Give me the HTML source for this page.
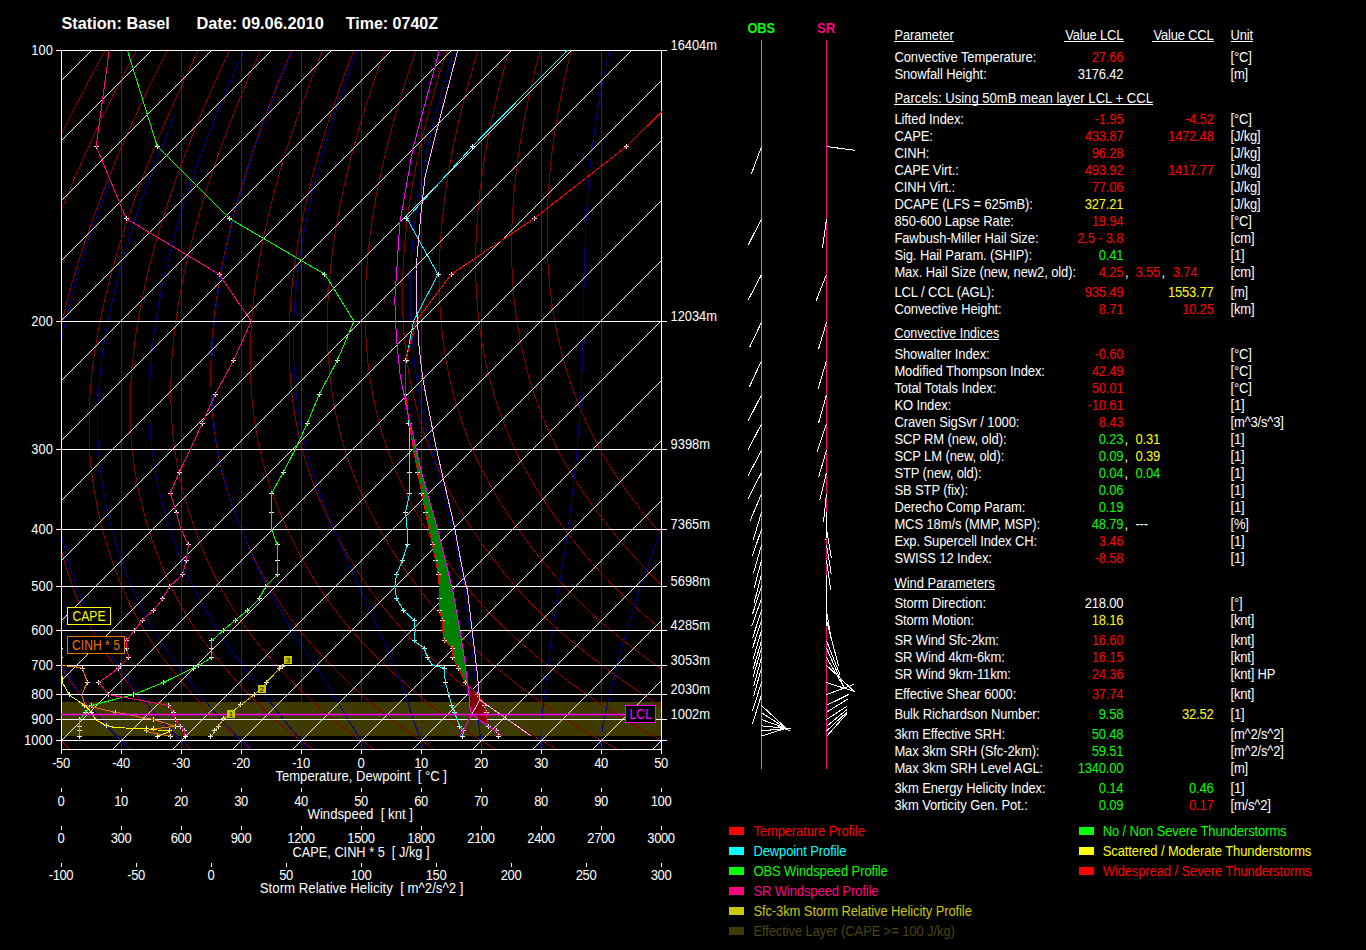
<!DOCTYPE html><html><head><meta charset="utf-8"><style>html,body{margin:0;padding:0;background:#000;overflow:hidden}svg{display:block}text{font-family:"Liberation Sans",sans-serif;white-space:pre}</style></head><body>
<svg width="1366" height="950" viewBox="0 0 1366 950" shape-rendering="crispEdges">
<rect width="1366" height="950" fill="#000"/>
<defs><clipPath id="pc"><rect x="61" y="50" width="601" height="700"/></clipPath></defs>
<g clip-path="url(#pc)">
<rect x="61" y="702" width="600" height="34" fill="#3f3a00"/>
<polyline points="117.6,27.9 114.9,32.8 112.1,37.7 109.4,42.6 106.8,47.5 104.1,52.4 101.4,57.2 98.8,62.1 96.2,66.9 93.6,71.7 91.0,76.5 88.5,81.3 85.9,86.1 83.5,90.8 81.0,95.6 78.6,100.3 76.1,104.9 73.8,109.6 71.4,114.3 69.1,118.9 66.7,123.5 64.5,128.1 62.2,132.7 60.0,137.3 57.8,141.8 55.6,146.3 53.4,150.8 51.3,155.3 49.2,159.8 47.1,164.2 45.0,168.7 43.0,173.1 41.0,177.5 39.0,181.9 37.1,186.2 35.1,190.6 33.2,194.9 31.4,199.2 29.5,203.5 27.7,207.8 25.9,212.1 24.1,216.3 22.3,220.5 20.6,224.7 18.9,228.9 17.2,233.1 15.6,237.3 13.9,241.4 12.3,245.5 10.8,249.6 9.2,253.7 7.7,257.8 6.2,261.9 4.7,265.9 3.2,269.9 1.8,273.9 0.4,277.9 -1.0,281.9 -2.3,285.9 -3.7,289.8 -5.0,293.7 -6.3,297.6 -7.5,301.5 -8.8,305.4 -10.0,309.3 -11.1,313.1 -12.3,316.9 -13.4,320.7 -14.6,324.5 -15.6,328.3 -16.7,332.1 -17.7,335.8 -18.7,339.6 -19.7,343.3 -20.7,347.0 -21.6,350.6 -22.5,354.3 -23.4,358.0 -24.3,361.6 -25.1,365.2 -25.9,368.8 -26.7,372.4 -27.5,376.0 -28.2,379.5 -29.0,383.1 -29.6,386.6 -30.3,390.1 -31.0,393.6 -31.6,397.1 -32.2,400.5 -32.7,404.0 -33.3,407.4 -33.8,410.8 -34.3,414.2 -34.8,417.6 -35.2,421.0 -35.6,424.3 -36.0,427.7 -36.4,431.0 -36.7,434.3 -37.0,437.6 -37.3,440.9 -37.6,444.1 -37.9,447.4 -38.1,450.6 -38.3,453.8 -38.4,457.0 -38.6,460.2 -38.7,463.4 -38.8,466.5 -38.9,469.7 -38.9,472.8 -39.0,475.9 -39.0,479.0 -39.0,482.1 -38.9,485.2 -38.9,488.3 -38.8,491.3 -38.7,494.4 -38.6,497.4 -38.5,500.4 -38.3,503.5 -38.1,506.5 -37.9,509.5 -37.7,512.5 -37.5,515.4 -37.2,518.4 -36.9,521.4 -36.7,524.3 -36.3,527.3 -36.0,530.2 -35.7,533.2 -35.3,536.1 -34.9,539.0 -34.5,541.9 -34.1,544.8 -33.7,547.7 -33.3,550.6 -32.8,553.5 -32.3,556.4 -31.8,559.3 -31.3,562.1 -30.7,565.0 -30.2,567.8 -29.6,570.6 -29.0,573.5 -28.4,576.3 -27.7,579.1 -27.1,581.9 -26.4,584.7 -25.7,587.5 -24.9,590.2 -24.2,593.0 -23.4,595.7 -22.6,598.5 -21.8,601.2 -21.0,603.9 -20.1,606.6 -19.3,609.3 -18.4,612.0 -17.4,614.7 -16.5,617.3 -15.5,619.9 -14.5,622.6 -13.5,625.2 -12.4,627.8 -11.4,630.4 -10.3,633.0 -9.1,635.5 -8.0,638.1 -6.8,640.6 -5.6,643.1 -4.4,645.6 -3.2,648.1 -1.9,650.6 -0.6,653.1 0.7,655.6 2.0,658.1 3.3,660.5 4.7,663.0 6.1,665.5 7.5,667.9 8.9,670.4 10.3,672.8 11.7,675.2 13.2,677.7 14.7,680.1 16.2,682.5 17.7,685.0 19.2,687.4 20.7,689.8 22.3,692.2 23.9,694.6 25.5,697.0 27.1,699.4 28.7,701.8 30.4,704.1 32.0,706.5 33.7,708.8 35.5,711.2 37.2,713.5 39.0,715.8 40.8,718.1 42.7,720.4 44.6,722.6 46.5,724.8 48.4,727.1 50.4,729.3 52.4,731.4 54.4,733.6 56.5,735.8 58.6,737.9 60.7,740.1 62.8,742.2 64.9,744.3 67.0,746.5 69.2,748.6 71.4,750.7 73.6,752.8 75.8,754.9" fill="none" stroke="#800000" stroke-width="1" stroke-linejoin="round" />
<polyline points="148.2,27.9 145.6,32.8 142.9,37.7 140.3,42.6 137.8,47.5 135.2,52.4 132.6,57.2 130.1,62.1 127.6,66.9 125.1,71.7 122.6,76.5 120.2,81.3 117.8,86.1 115.4,90.8 113.0,95.6 110.7,100.3 108.4,104.9 106.1,109.6 103.8,114.3 101.6,118.9 99.4,123.5 97.2,128.1 95.0,132.7 92.9,137.3 90.8,141.8 88.7,146.3 86.7,150.8 84.7,155.3 82.7,159.8 80.7,164.2 78.7,168.7 76.8,173.1 74.9,177.5 73.0,181.9 71.2,186.2 69.4,190.6 67.6,194.9 65.8,199.2 64.1,203.5 62.3,207.8 60.6,212.1 59.0,216.3 57.3,220.5 55.7,224.7 54.1,228.9 52.5,233.1 51.0,237.3 49.5,241.4 48.0,245.5 46.5,249.6 45.1,253.7 43.7,257.8 42.3,261.9 40.9,265.9 39.6,269.9 38.3,273.9 37.0,277.9 35.7,281.9 34.5,285.9 33.2,289.8 32.1,293.7 30.9,297.6 29.8,301.5 28.6,305.4 27.6,309.3 26.5,313.1 25.4,316.9 24.4,320.7 23.4,324.5 22.5,328.3 21.5,332.1 20.6,335.8 19.7,339.6 18.9,343.3 18.0,347.0 17.2,350.6 16.4,354.3 15.7,358.0 14.9,361.6 14.2,365.2 13.5,368.8 12.9,372.4 12.2,376.0 11.6,379.5 11.0,383.1 10.5,386.6 9.9,390.1 9.4,393.6 8.9,397.1 8.4,400.5 8.0,404.0 7.6,407.4 7.2,410.8 6.8,414.2 6.5,417.6 6.2,421.0 5.9,424.3 5.6,427.7 5.4,431.0 5.2,434.3 5.0,437.6 4.8,440.9 4.7,444.1 4.6,447.4 4.5,450.6 4.5,453.8 4.4,457.0 4.4,460.2 4.4,463.4 4.5,466.5 4.5,469.7 4.6,472.8 4.7,475.9 4.8,479.0 5.0,482.1 5.2,485.2 5.4,488.3 5.6,491.3 5.8,494.4 6.1,497.4 6.4,500.4 6.7,503.5 7.0,506.5 7.3,509.5 7.7,512.5 8.1,515.4 8.5,518.4 8.9,521.4 9.3,524.3 9.8,527.3 10.2,530.2 10.7,533.2 11.2,536.1 11.8,539.0 12.3,541.9 12.9,544.8 13.4,547.7 14.0,550.6 14.7,553.5 15.3,556.4 15.9,559.3 16.6,562.1 17.3,565.0 18.0,567.8 18.8,570.6 19.5,573.5 20.3,576.3 21.1,579.1 21.9,581.9 22.7,584.7 23.6,587.5 24.5,590.2 25.4,593.0 26.3,595.7 27.3,598.5 28.2,601.2 29.2,603.9 30.2,606.6 31.3,609.3 32.3,612.0 33.4,614.7 34.5,617.3 35.7,619.9 36.8,622.6 38.0,625.2 39.2,627.8 40.5,630.4 41.7,633.0 43.0,635.5 44.4,638.1 45.7,640.6 47.1,643.1 48.4,645.6 49.9,648.1 51.3,650.6 52.7,653.1 54.2,655.6 55.7,658.1 57.2,660.5 58.7,663.0 60.3,665.5 61.8,667.9 63.4,670.4 65.0,672.8 66.6,675.2 68.3,677.7 69.9,680.1 71.6,682.5 73.3,685.0 75.0,687.4 76.7,689.8 78.4,692.2 80.2,694.6 81.9,697.0 83.7,699.4 85.5,701.8 87.4,704.1 89.2,706.5 91.1,708.8 93.0,711.2 95.0,713.5 97.0,715.8 99.0,718.1 101.0,720.4 103.1,722.6 105.2,724.8 107.3,727.1 109.4,729.3 111.6,731.4 113.8,733.6 116.1,735.8 118.4,737.9 120.6,740.1 122.9,742.2 125.3,744.3 127.6,746.5 130.0,748.6 132.3,750.7 134.8,752.8 137.2,754.9" fill="none" stroke="#800000" stroke-width="1" stroke-linejoin="round" />
<polyline points="178.9,27.9 176.3,32.8 173.8,37.7 171.3,42.6 168.8,47.5 166.3,52.4 163.8,57.2 161.4,62.1 159.0,66.9 156.6,71.7 154.2,76.5 151.9,81.3 149.6,86.1 147.3,90.8 145.0,95.6 142.8,100.3 140.6,104.9 138.4,109.6 136.2,114.3 134.1,118.9 132.0,123.5 129.9,128.1 127.9,132.7 125.9,137.3 123.9,141.8 121.9,146.3 119.9,150.8 118.0,155.3 116.1,159.8 114.3,164.2 112.4,168.7 110.6,173.1 108.8,177.5 107.0,181.9 105.3,186.2 103.6,190.6 101.9,194.9 100.2,199.2 98.6,203.5 97.0,207.8 95.4,212.1 93.8,216.3 92.3,220.5 90.8,224.7 89.3,228.9 87.9,233.1 86.4,237.3 85.0,241.4 83.7,245.5 82.3,249.6 81.0,253.7 79.7,257.8 78.4,261.9 77.1,265.9 75.9,269.9 74.7,273.9 73.5,277.9 72.4,281.9 71.3,285.9 70.2,289.8 69.1,293.7 68.1,297.6 67.0,301.5 66.0,305.4 65.1,309.3 64.1,313.1 63.2,316.9 62.3,320.7 61.4,324.5 60.6,328.3 59.8,332.1 59.0,335.8 58.2,339.6 57.5,343.3 56.8,347.0 56.1,350.6 55.4,354.3 54.8,358.0 54.1,361.6 53.6,365.2 53.0,368.8 52.5,372.4 51.9,376.0 51.5,379.5 51.0,383.1 50.6,386.6 50.1,390.1 49.8,393.6 49.4,397.1 49.1,400.5 48.8,404.0 48.5,407.4 48.2,410.8 48.0,414.2 47.8,417.6 47.6,421.0 47.4,424.3 47.3,427.7 47.2,431.0 47.1,434.3 47.1,437.6 47.0,440.9 47.0,444.1 47.1,447.4 47.1,450.6 47.2,453.8 47.3,457.0 47.4,460.2 47.6,463.4 47.7,466.5 47.9,469.7 48.1,472.8 48.4,475.9 48.7,479.0 49.0,482.1 49.3,485.2 49.6,488.3 50.0,491.3 50.3,494.4 50.7,497.4 51.2,500.4 51.6,503.5 52.1,506.5 52.6,509.5 53.1,512.5 53.6,515.4 54.1,518.4 54.7,521.4 55.3,524.3 55.9,527.3 56.5,530.2 57.1,533.2 57.8,536.1 58.4,539.0 59.1,541.9 59.8,544.8 60.6,547.7 61.3,550.6 62.1,553.5 62.9,556.4 63.7,559.3 64.5,562.1 65.4,565.0 66.2,567.8 67.1,570.6 68.0,573.5 69.0,576.3 69.9,579.1 70.9,581.9 71.9,584.7 72.9,587.5 73.9,590.2 75.0,593.0 76.1,595.7 77.2,598.5 78.3,601.2 79.5,603.9 80.6,606.6 81.8,609.3 83.1,612.0 84.3,614.7 85.6,617.3 86.9,619.9 88.2,622.6 89.5,625.2 90.9,627.8 92.3,630.4 93.8,633.0 95.2,635.5 96.7,638.1 98.2,640.6 99.7,643.1 101.3,645.6 102.9,648.1 104.5,650.6 106.1,653.1 107.7,655.6 109.4,658.1 111.1,660.5 112.8,663.0 114.5,665.5 116.2,667.9 118.0,670.4 119.7,672.8 121.5,675.2 123.3,677.7 125.1,680.1 127.0,682.5 128.8,685.0 130.7,687.4 132.6,689.8 134.5,692.2 136.5,694.6 138.4,697.0 140.4,699.4 142.4,701.8 144.4,704.1 146.4,706.5 148.5,708.8 150.6,711.2 152.7,713.5 154.9,715.8 157.1,718.1 159.3,720.4 161.5,722.6 163.8,724.8 166.1,727.1 168.5,729.3 170.9,731.4 173.3,733.6 175.7,735.8 178.2,737.9 180.6,740.1 183.1,742.2 185.6,744.3 188.2,746.5 190.7,748.6 193.3,750.7 195.9,752.8 198.5,754.9" fill="none" stroke="#800000" stroke-width="1" stroke-linejoin="round" />
<polyline points="209.5,27.9 207.0,32.8 204.6,37.7 202.2,42.6 199.8,47.5 197.4,52.4 195.1,57.2 192.7,62.1 190.4,66.9 188.1,71.7 185.8,76.5 183.6,81.3 181.4,86.1 179.2,90.8 177.0,95.6 174.9,100.3 172.8,104.9 170.7,109.6 168.7,114.3 166.6,118.9 164.6,123.5 162.7,128.1 160.7,132.7 158.8,137.3 156.9,141.8 155.0,146.3 153.2,150.8 151.4,155.3 149.6,159.8 147.8,164.2 146.1,168.7 144.4,173.1 142.7,177.5 141.0,181.9 139.4,186.2 137.8,190.6 136.2,194.9 134.7,199.2 133.1,203.5 131.6,207.8 130.2,212.1 128.7,216.3 127.3,220.5 125.9,224.7 124.5,228.9 123.2,233.1 121.9,237.3 120.6,241.4 119.3,245.5 118.1,249.6 116.9,253.7 115.7,257.8 114.5,261.9 113.4,265.9 112.3,269.9 111.2,273.9 110.1,277.9 109.1,281.9 108.1,285.9 107.1,289.8 106.1,293.7 105.2,297.6 104.3,301.5 103.4,305.4 102.6,309.3 101.8,313.1 101.0,316.9 100.2,320.7 99.4,324.5 98.7,328.3 98.0,332.1 97.3,335.8 96.7,339.6 96.1,343.3 95.5,347.0 94.9,350.6 94.4,354.3 93.9,358.0 93.4,361.6 92.9,365.2 92.5,368.8 92.0,372.4 91.7,376.0 91.3,379.5 91.0,383.1 90.7,386.6 90.4,390.1 90.1,393.6 89.9,397.1 89.7,400.5 89.5,404.0 89.3,407.4 89.2,410.8 89.1,414.2 89.0,417.6 89.0,421.0 89.0,424.3 89.0,427.7 89.0,431.0 89.0,434.3 89.1,437.6 89.2,440.9 89.4,444.1 89.5,447.4 89.7,450.6 89.9,453.8 90.1,457.0 90.4,460.2 90.7,463.4 91.0,466.5 91.3,469.7 91.7,472.8 92.1,475.9 92.5,479.0 92.9,482.1 93.4,485.2 93.8,488.3 94.3,491.3 94.9,494.4 95.4,497.4 96.0,500.4 96.6,503.5 97.2,506.5 97.8,509.5 98.4,512.5 99.1,515.4 99.8,518.4 100.5,521.4 101.2,524.3 102.0,527.3 102.7,530.2 103.5,533.2 104.3,536.1 105.1,539.0 106.0,541.9 106.8,544.8 107.7,547.7 108.6,550.6 109.5,553.5 110.5,556.4 111.4,559.3 112.4,562.1 113.4,565.0 114.4,567.8 115.5,570.6 116.5,573.5 117.6,576.3 118.7,579.1 119.8,581.9 121.0,584.7 122.2,587.5 123.4,590.2 124.6,593.0 125.8,595.7 127.1,598.5 128.4,601.2 129.7,603.9 131.0,606.6 132.4,609.3 133.8,612.0 135.2,614.7 136.6,617.3 138.1,619.9 139.6,622.6 141.1,625.2 142.6,627.8 144.2,630.4 145.8,633.0 147.4,635.5 149.0,638.1 150.7,640.6 152.4,643.1 154.1,645.6 155.9,648.1 157.6,650.6 159.4,653.1 161.2,655.6 163.1,658.1 164.9,660.5 166.8,663.0 168.7,665.5 170.6,667.9 172.5,670.4 174.4,672.8 176.4,675.2 178.4,677.7 180.4,680.1 182.4,682.5 184.4,685.0 186.5,687.4 188.6,689.8 190.7,692.2 192.8,694.6 194.9,697.0 197.0,699.4 199.2,701.8 201.4,704.1 203.6,706.5 205.9,708.8 208.2,711.2 210.5,713.5 212.8,715.8 215.2,718.1 217.6,720.4 220.0,722.6 222.5,724.8 225.0,727.1 227.5,729.3 230.1,731.4 232.7,733.6 235.3,735.8 238.0,737.9 240.6,740.1 243.3,742.2 246.0,744.3 248.7,746.5 251.5,748.6 254.2,750.7 257.0,752.8 259.8,754.9" fill="none" stroke="#800000" stroke-width="1" stroke-linejoin="round" />
<polyline points="240.1,27.9 237.7,32.8 235.4,37.7 233.1,42.6 230.8,47.5 228.5,52.4 226.3,57.2 224.0,62.1 221.8,66.9 219.6,71.7 217.4,76.5 215.3,81.3 213.2,86.1 211.1,90.8 209.1,95.6 207.0,100.3 205.0,104.9 203.0,109.6 201.1,114.3 199.2,118.9 197.3,123.5 195.4,128.1 193.6,132.7 191.7,137.3 190.0,141.8 188.2,146.3 186.5,150.8 184.7,155.3 183.1,159.8 181.4,164.2 179.8,168.7 178.2,173.1 176.6,177.5 175.0,181.9 173.5,186.2 172.0,190.6 170.6,194.9 169.1,199.2 167.7,203.5 166.3,207.8 164.9,212.1 163.6,216.3 162.3,220.5 161.0,224.7 159.7,228.9 158.5,233.1 157.3,237.3 156.1,241.4 155.0,245.5 153.9,249.6 152.8,253.7 151.7,257.8 150.6,261.9 149.6,265.9 148.6,269.9 147.6,273.9 146.7,277.9 145.8,281.9 144.9,285.9 144.0,289.8 143.2,293.7 142.4,297.6 141.6,301.5 140.8,305.4 140.1,309.3 139.4,313.1 138.7,316.9 138.1,320.7 137.4,324.5 136.8,328.3 136.3,332.1 135.7,335.8 135.2,339.6 134.7,343.3 134.2,347.0 133.8,350.6 133.3,354.3 133.0,358.0 132.6,361.6 132.2,365.2 131.9,368.8 131.6,372.4 131.4,376.0 131.1,379.5 130.9,383.1 130.8,386.6 130.6,390.1 130.5,393.6 130.4,397.1 130.3,400.5 130.2,404.0 130.2,407.4 130.2,410.8 130.2,414.2 130.3,417.6 130.4,421.0 130.5,424.3 130.6,427.7 130.8,431.0 131.0,434.3 131.2,437.6 131.4,440.9 131.7,444.1 132.0,447.4 132.3,450.6 132.6,453.8 133.0,457.0 133.4,460.2 133.8,463.4 134.3,466.5 134.7,469.7 135.2,472.8 135.8,475.9 136.3,479.0 136.9,482.1 137.5,485.2 138.1,488.3 138.7,491.3 139.4,494.4 140.1,497.4 140.8,500.4 141.5,503.5 142.3,506.5 143.0,509.5 143.8,512.5 144.6,515.4 145.5,518.4 146.3,521.4 147.2,524.3 148.1,527.3 149.0,530.2 149.9,533.2 150.9,536.1 151.8,539.0 152.8,541.9 153.8,544.8 154.9,547.7 155.9,550.6 157.0,553.5 158.1,556.4 159.2,559.3 160.3,562.1 161.5,565.0 162.6,567.8 163.8,570.6 165.0,573.5 166.3,576.3 167.5,579.1 168.8,581.9 170.1,584.7 171.4,587.5 172.8,590.2 174.2,593.0 175.6,595.7 177.0,598.5 178.4,601.2 179.9,603.9 181.4,606.6 182.9,609.3 184.5,612.0 186.0,614.7 187.6,617.3 189.3,619.9 190.9,622.6 192.6,625.2 194.3,627.8 196.0,630.4 197.8,633.0 199.6,635.5 201.4,638.1 203.2,640.6 205.1,643.1 207.0,645.6 208.9,648.1 210.8,650.6 212.8,653.1 214.7,655.6 216.8,658.1 218.8,660.5 220.8,663.0 222.9,665.5 225.0,667.9 227.0,670.4 229.2,672.8 231.3,675.2 233.5,677.7 235.6,680.1 237.8,682.5 240.0,685.0 242.3,687.4 244.5,689.8 246.8,692.2 249.1,694.6 251.4,697.0 253.7,699.4 256.1,701.8 258.4,704.1 260.8,706.5 263.3,708.8 265.7,711.2 268.2,713.5 270.7,715.8 273.3,718.1 275.9,720.4 278.5,722.6 281.2,724.8 283.9,727.1 286.6,729.3 289.3,731.4 292.1,733.6 294.9,735.8 297.7,737.9 300.6,740.1 303.5,742.2 306.4,744.3 309.3,746.5 312.2,748.6 315.2,750.7 318.2,752.8 321.2,754.9" fill="none" stroke="#800000" stroke-width="1" stroke-linejoin="round" />
<polyline points="270.7,27.9 268.5,32.8 266.2,37.7 264.0,42.6 261.8,47.5 259.7,52.4 257.5,57.2 255.3,62.1 253.2,66.9 251.1,71.7 249.1,76.5 247.0,81.3 245.0,86.1 243.0,90.8 241.1,95.6 239.1,100.3 237.2,104.9 235.4,109.6 233.5,114.3 231.7,118.9 229.9,123.5 228.1,128.1 226.4,132.7 224.7,137.3 223.0,141.8 221.3,146.3 219.7,150.8 218.1,155.3 216.5,159.8 215.0,164.2 213.5,168.7 212.0,173.1 210.5,177.5 209.1,181.9 207.6,186.2 206.2,190.6 204.9,194.9 203.6,199.2 202.2,203.5 201.0,207.8 199.7,212.1 198.5,216.3 197.3,220.5 196.1,224.7 195.0,228.9 193.8,233.1 192.7,237.3 191.7,241.4 190.6,245.5 189.6,249.6 188.6,253.7 187.7,257.8 186.7,261.9 185.8,265.9 185.0,269.9 184.1,273.9 183.3,277.9 182.5,281.9 181.7,285.9 181.0,289.8 180.2,293.7 179.5,297.6 178.9,301.5 178.2,305.4 177.6,309.3 177.0,313.1 176.5,316.9 175.9,320.7 175.4,324.5 174.9,328.3 174.5,332.1 174.1,335.8 173.7,339.6 173.3,343.3 172.9,347.0 172.6,350.6 172.3,354.3 172.0,358.0 171.8,361.6 171.6,365.2 171.4,368.8 171.2,372.4 171.1,376.0 171.0,379.5 170.9,383.1 170.9,386.6 170.8,390.1 170.8,393.6 170.8,397.1 170.9,400.5 171.0,404.0 171.1,407.4 171.2,410.8 171.4,414.2 171.6,417.6 171.8,421.0 172.0,424.3 172.3,427.7 172.6,431.0 172.9,434.3 173.2,437.6 173.6,440.9 174.0,444.1 174.4,447.4 174.9,450.6 175.4,453.8 175.9,457.0 176.4,460.2 177.0,463.4 177.5,466.5 178.2,469.7 178.8,472.8 179.4,475.9 180.1,479.0 180.8,482.1 181.6,485.2 182.3,488.3 183.1,491.3 183.9,494.4 184.7,497.4 185.6,500.4 186.5,503.5 187.3,506.5 188.3,509.5 189.2,512.5 190.2,515.4 191.1,518.4 192.1,521.4 193.1,524.3 194.2,527.3 195.2,530.2 196.3,533.2 197.4,536.1 198.5,539.0 199.7,541.9 200.8,544.8 202.0,547.7 203.2,550.6 204.4,553.5 205.7,556.4 206.9,559.3 208.2,562.1 209.5,565.0 210.8,567.8 212.2,570.6 213.5,573.5 214.9,576.3 216.3,579.1 217.8,581.9 219.2,584.7 220.7,587.5 222.2,590.2 223.8,593.0 225.3,595.7 226.9,598.5 228.5,601.2 230.1,603.9 231.8,606.6 233.5,609.3 235.2,612.0 236.9,614.7 238.7,617.3 240.4,619.9 242.3,622.6 244.1,625.2 246.0,627.8 247.9,630.4 249.8,633.0 251.7,635.5 253.7,638.1 255.7,640.6 257.8,643.1 259.8,645.6 261.9,648.1 264.0,650.6 266.1,653.1 268.3,655.6 270.4,658.1 272.6,660.5 274.8,663.0 277.1,665.5 279.3,667.9 281.6,670.4 283.9,672.8 286.2,675.2 288.5,677.7 290.9,680.1 293.2,682.5 295.6,685.0 298.0,687.4 300.5,689.8 302.9,692.2 305.4,694.6 307.9,697.0 310.4,699.4 312.9,701.8 315.5,704.1 318.0,706.5 320.7,708.8 323.3,711.2 326.0,713.5 328.7,715.8 331.4,718.1 334.2,720.4 337.0,722.6 339.8,724.8 342.7,727.1 345.6,729.3 348.6,731.4 351.5,733.6 354.5,735.8 357.5,737.9 360.6,740.1 363.7,742.2 366.7,744.3 369.8,746.5 373.0,748.6 376.1,750.7 379.3,752.8 382.5,754.9" fill="none" stroke="#800000" stroke-width="1" stroke-linejoin="round" />
<polyline points="301.4,27.9 299.2,32.8 297.1,37.7 294.9,42.6 292.9,47.5 290.8,52.4 288.7,57.2 286.7,62.1 284.6,66.9 282.6,71.7 280.7,76.5 278.7,81.3 276.8,86.1 274.9,90.8 273.1,95.6 271.3,100.3 269.5,104.9 267.7,109.6 265.9,114.3 264.2,118.9 262.5,123.5 260.9,128.1 259.2,132.7 257.6,137.3 256.0,141.8 254.5,146.3 253.0,150.8 251.5,155.3 250.0,159.8 248.6,164.2 247.1,168.7 245.8,173.1 244.4,177.5 243.1,181.9 241.7,186.2 240.5,190.6 239.2,194.9 238.0,199.2 236.8,203.5 235.6,207.8 234.5,212.1 233.4,216.3 232.3,220.5 231.2,224.7 230.2,228.9 229.2,233.1 228.2,237.3 227.2,241.4 226.3,245.5 225.4,249.6 224.5,253.7 223.7,257.8 222.9,261.9 222.1,265.9 221.3,269.9 220.6,273.9 219.9,277.9 219.2,281.9 218.5,285.9 217.9,289.8 217.3,293.7 216.7,297.6 216.2,301.5 215.6,305.4 215.1,309.3 214.7,313.1 214.2,316.9 213.8,320.7 213.4,324.5 213.1,328.3 212.7,332.1 212.4,335.8 212.1,339.6 211.9,343.3 211.7,347.0 211.5,350.6 211.3,354.3 211.1,358.0 211.0,361.6 210.9,365.2 210.9,368.8 210.8,372.4 210.8,376.0 210.8,379.5 210.9,383.1 211.0,386.6 211.1,390.1 211.2,393.6 211.3,397.1 211.5,400.5 211.7,404.0 212.0,407.4 212.2,410.8 212.5,414.2 212.8,417.6 213.2,421.0 213.5,424.3 213.9,427.7 214.3,431.0 214.8,434.3 215.3,437.6 215.8,440.9 216.3,444.1 216.9,447.4 217.5,450.6 218.1,453.8 218.7,457.0 219.4,460.2 220.1,463.4 220.8,466.5 221.6,469.7 222.3,472.8 223.1,475.9 224.0,479.0 224.8,482.1 225.7,485.2 226.6,488.3 227.5,491.3 228.4,494.4 229.4,497.4 230.4,500.4 231.4,503.5 232.4,506.5 233.5,509.5 234.6,512.5 235.7,515.4 236.8,518.4 237.9,521.4 239.1,524.3 240.3,527.3 241.5,530.2 242.7,533.2 244.0,536.1 245.2,539.0 246.5,541.9 247.8,544.8 249.1,547.7 250.5,550.6 251.9,553.5 253.2,556.4 254.7,559.3 256.1,562.1 257.5,565.0 259.0,567.8 260.5,570.6 262.0,573.5 263.6,576.3 265.2,579.1 266.8,581.9 268.4,584.7 270.0,587.5 271.7,590.2 273.4,593.0 275.1,595.7 276.8,598.5 278.6,601.2 280.4,603.9 282.2,606.6 284.0,609.3 285.9,612.0 287.8,614.7 289.7,617.3 291.6,619.9 293.6,622.6 295.6,625.2 297.6,627.8 299.7,630.4 301.8,633.0 303.9,635.5 306.1,638.1 308.2,640.6 310.4,643.1 312.6,645.6 314.9,648.1 317.2,650.6 319.5,653.1 321.8,655.6 324.1,658.1 326.5,660.5 328.9,663.0 331.3,665.5 333.7,667.9 336.1,670.4 338.6,672.8 341.1,675.2 343.6,677.7 346.1,680.1 348.6,682.5 351.2,685.0 353.8,687.4 356.4,689.8 359.0,692.2 361.7,694.6 364.3,697.0 367.0,699.4 369.7,701.8 372.5,704.1 375.2,706.5 378.0,708.8 380.9,711.2 383.7,713.5 386.6,715.8 389.5,718.1 392.5,720.4 395.5,722.6 398.5,724.8 401.6,727.1 404.7,729.3 407.8,731.4 410.9,733.6 414.1,735.8 417.3,737.9 420.6,740.1 423.8,742.2 427.1,744.3 430.4,746.5 433.7,748.6 437.1,750.7 440.4,752.8 443.8,754.9" fill="none" stroke="#800000" stroke-width="1" stroke-linejoin="round" />
<polyline points="332.0,27.9 329.9,32.8 327.9,37.7 325.9,42.6 323.9,47.5 321.9,52.4 319.9,57.2 318.0,62.1 316.0,66.9 314.1,71.7 312.3,76.5 310.4,81.3 308.6,86.1 306.9,90.8 305.1,95.6 303.4,100.3 301.7,104.9 300.0,109.6 298.4,114.3 296.7,118.9 295.2,123.5 293.6,128.1 292.1,132.7 290.6,137.3 289.1,141.8 287.6,146.3 286.2,150.8 284.8,155.3 283.5,159.8 282.1,164.2 280.8,168.7 279.5,173.1 278.3,177.5 277.1,181.9 275.9,186.2 274.7,190.6 273.5,194.9 272.4,199.2 271.3,203.5 270.3,207.8 269.2,212.1 268.2,216.3 267.3,220.5 266.3,224.7 265.4,228.9 264.5,233.1 263.6,237.3 262.8,241.4 262.0,245.5 261.2,249.6 260.4,253.7 259.7,257.8 259.0,261.9 258.3,265.9 257.7,269.9 257.0,273.9 256.4,277.9 255.9,281.9 255.3,285.9 254.8,289.8 254.3,293.7 253.9,297.6 253.4,301.5 253.0,305.4 252.7,309.3 252.3,313.1 252.0,316.9 251.7,320.7 251.4,324.5 251.2,328.3 251.0,332.1 250.8,335.8 250.6,339.6 250.5,343.3 250.4,347.0 250.3,350.6 250.3,354.3 250.2,358.0 250.2,361.6 250.3,365.2 250.3,368.8 250.4,372.4 250.5,376.0 250.7,379.5 250.9,383.1 251.1,386.6 251.3,390.1 251.5,393.6 251.8,397.1 252.1,400.5 252.5,404.0 252.8,407.4 253.2,410.8 253.6,414.2 254.1,417.6 254.6,421.0 255.1,424.3 255.6,427.7 256.1,431.0 256.7,434.3 257.3,437.6 258.0,440.9 258.6,444.1 259.3,447.4 260.1,450.6 260.8,453.8 261.6,457.0 262.4,460.2 263.2,463.4 264.1,466.5 265.0,469.7 265.9,472.8 266.8,475.9 267.8,479.0 268.8,482.1 269.8,485.2 270.8,488.3 271.9,491.3 273.0,494.4 274.1,497.4 275.2,500.4 276.4,503.5 277.5,506.5 278.7,509.5 280.0,512.5 281.2,515.4 282.5,518.4 283.8,521.4 285.1,524.3 286.4,527.3 287.7,530.2 289.1,533.2 290.5,536.1 291.9,539.0 293.3,541.9 294.8,544.8 296.3,547.7 297.8,550.6 299.3,553.5 300.8,556.4 302.4,559.3 304.0,562.1 305.6,565.0 307.2,567.8 308.9,570.6 310.5,573.5 312.2,576.3 314.0,579.1 315.7,581.9 317.5,584.7 319.3,587.5 321.1,590.2 323.0,593.0 324.8,595.7 326.7,598.5 328.6,601.2 330.6,603.9 332.6,606.6 334.6,609.3 336.6,612.0 338.6,614.7 340.7,617.3 342.8,619.9 345.0,622.6 347.1,625.2 349.3,627.8 351.6,630.4 353.8,633.0 356.1,635.5 358.4,638.1 360.7,640.6 363.1,643.1 365.5,645.6 367.9,648.1 370.3,650.6 372.8,653.1 375.3,655.6 377.8,658.1 380.3,660.5 382.9,663.0 385.5,665.5 388.1,667.9 390.7,670.4 393.3,672.8 396.0,675.2 398.6,677.7 401.3,680.1 404.1,682.5 406.8,685.0 409.6,687.4 412.3,689.8 415.1,692.2 418.0,694.6 420.8,697.0 423.7,699.4 426.6,701.8 429.5,704.1 432.4,706.5 435.4,708.8 438.4,711.2 441.5,713.5 444.5,715.8 447.6,718.1 450.8,720.4 454.0,722.6 457.2,724.8 460.4,727.1 463.7,729.3 467.0,731.4 470.4,733.6 473.7,735.8 477.1,737.9 480.6,740.1 484.0,742.2 487.5,744.3 491.0,746.5 494.5,748.6 498.0,750.7 501.6,752.8 505.2,754.9" fill="none" stroke="#800000" stroke-width="1" stroke-linejoin="round" />
<polyline points="362.6,27.9 360.6,32.8 358.7,37.7 356.8,42.6 354.9,47.5 353.0,52.4 351.1,57.2 349.3,62.1 347.5,66.9 345.7,71.7 343.9,76.5 342.2,81.3 340.4,86.1 338.8,90.8 337.1,95.6 335.5,100.3 333.9,104.9 332.3,109.6 330.8,114.3 329.3,118.9 327.8,123.5 326.3,128.1 324.9,132.7 323.5,137.3 322.1,141.8 320.8,146.3 319.5,150.8 318.2,155.3 316.9,159.8 315.7,164.2 314.5,168.7 313.3,173.1 312.2,177.5 311.1,181.9 310.0,186.2 308.9,190.6 307.9,194.9 306.9,199.2 305.9,203.5 304.9,207.8 304.0,212.1 303.1,216.3 302.2,220.5 301.4,224.7 300.6,228.9 299.8,233.1 299.1,237.3 298.3,241.4 297.6,245.5 296.9,249.6 296.3,253.7 295.7,257.8 295.1,261.9 294.5,265.9 294.0,269.9 293.5,273.9 293.0,277.9 292.6,281.9 292.1,285.9 291.7,289.8 291.4,293.7 291.0,297.6 290.7,301.5 290.4,305.4 290.2,309.3 289.9,313.1 289.7,316.9 289.6,320.7 289.4,324.5 289.3,328.3 289.2,332.1 289.1,335.8 289.1,339.6 289.1,343.3 289.1,347.0 289.2,350.6 289.2,354.3 289.3,358.0 289.5,361.6 289.6,365.2 289.8,368.8 290.0,372.4 290.3,376.0 290.5,379.5 290.8,383.1 291.2,386.6 291.5,390.1 291.9,393.6 292.3,397.1 292.7,400.5 293.2,404.0 293.7,407.4 294.2,410.8 294.8,414.2 295.3,417.6 295.9,421.0 296.6,424.3 297.2,427.7 297.9,431.0 298.6,434.3 299.4,437.6 300.2,440.9 301.0,444.1 301.8,447.4 302.7,450.6 303.5,453.8 304.5,457.0 305.4,460.2 306.4,463.4 307.4,466.5 308.4,469.7 309.4,472.8 310.5,475.9 311.6,479.0 312.7,482.1 313.9,485.2 315.1,488.3 316.3,491.3 317.5,494.4 318.7,497.4 320.0,500.4 321.3,503.5 322.6,506.5 324.0,509.5 325.3,512.5 326.7,515.4 328.1,518.4 329.6,521.4 331.0,524.3 332.5,527.3 334.0,530.2 335.5,533.2 337.0,536.1 338.6,539.0 340.2,541.9 341.8,544.8 343.4,547.7 345.1,550.6 346.7,553.5 348.4,556.4 350.1,559.3 351.9,562.1 353.6,565.0 355.4,567.8 357.2,570.6 359.1,573.5 360.9,576.3 362.8,579.1 364.7,581.9 366.6,584.7 368.6,587.5 370.5,590.2 372.5,593.0 374.6,595.7 376.6,598.5 378.7,601.2 380.8,603.9 382.9,606.6 385.1,609.3 387.3,612.0 389.5,614.7 391.8,617.3 394.0,619.9 396.3,622.6 398.7,625.2 401.0,627.8 403.4,630.4 405.8,633.0 408.3,635.5 410.7,638.1 413.2,640.6 415.8,643.1 418.3,645.6 420.9,648.1 423.5,650.6 426.2,653.1 428.8,655.6 431.5,658.1 434.2,660.5 436.9,663.0 439.7,665.5 442.4,667.9 445.2,670.4 448.0,672.8 450.9,675.2 453.7,677.7 456.6,680.1 459.5,682.5 462.4,685.0 465.3,687.4 468.3,689.8 471.3,692.2 474.3,694.6 477.3,697.0 480.3,699.4 483.4,701.8 486.5,704.1 489.6,706.5 492.8,708.8 496.0,711.2 499.2,713.5 502.5,715.8 505.8,718.1 509.1,720.4 512.4,722.6 515.8,724.8 519.3,727.1 522.8,729.3 526.3,731.4 529.8,733.6 533.3,735.8 536.9,737.9 540.6,740.1 544.2,742.2 547.8,744.3 551.5,746.5 555.2,748.6 559.0,750.7 562.7,752.8 566.5,754.9" fill="none" stroke="#800000" stroke-width="1" stroke-linejoin="round" />
<polyline points="393.2,27.9 391.4,32.8 389.5,37.7 387.7,42.6 385.9,47.5 384.1,52.4 382.3,57.2 380.6,62.1 378.9,66.9 377.2,71.7 375.5,76.5 373.9,81.3 372.3,86.1 370.7,90.8 369.1,95.6 367.6,100.3 366.1,104.9 364.7,109.6 363.2,114.3 361.8,118.9 360.4,123.5 359.1,128.1 357.8,132.7 356.5,137.3 355.2,141.8 354.0,146.3 352.7,150.8 351.6,155.3 350.4,159.8 349.3,164.2 348.2,168.7 347.1,173.1 346.1,177.5 345.1,181.9 344.1,186.2 343.1,190.6 342.2,194.9 341.3,199.2 340.4,203.5 339.6,207.8 338.8,212.1 338.0,216.3 337.2,220.5 336.5,224.7 335.8,228.9 335.1,233.1 334.5,237.3 333.9,241.4 333.3,245.5 332.7,249.6 332.2,253.7 331.7,257.8 331.2,261.9 330.8,265.9 330.3,269.9 330.0,273.9 329.6,277.9 329.3,281.9 328.9,285.9 328.7,289.8 328.4,293.7 328.2,297.6 328.0,301.5 327.8,305.4 327.7,309.3 327.6,313.1 327.5,316.9 327.4,320.7 327.4,324.5 327.4,328.3 327.4,332.1 327.5,335.8 327.6,339.6 327.7,343.3 327.8,347.0 328.0,350.6 328.2,354.3 328.4,358.0 328.7,361.6 329.0,365.2 329.3,368.8 329.6,372.4 330.0,376.0 330.4,379.5 330.8,383.1 331.3,386.6 331.7,390.1 332.2,393.6 332.8,397.1 333.3,400.5 333.9,404.0 334.6,407.4 335.2,410.8 335.9,414.2 336.6,417.6 337.3,421.0 338.1,424.3 338.9,427.7 339.7,431.0 340.6,434.3 341.4,437.6 342.3,440.9 343.3,444.1 344.2,447.4 345.2,450.6 346.3,453.8 347.3,457.0 348.4,460.2 349.5,463.4 350.6,466.5 351.8,469.7 353.0,472.8 354.2,475.9 355.4,479.0 356.7,482.1 358.0,485.2 359.3,488.3 360.6,491.3 362.0,494.4 363.4,497.4 364.8,500.4 366.3,503.5 367.7,506.5 369.2,509.5 370.7,512.5 372.2,515.4 373.8,518.4 375.4,521.4 377.0,524.3 378.6,527.3 380.2,530.2 381.9,533.2 383.6,536.1 385.3,539.0 387.0,541.9 388.8,544.8 390.6,547.7 392.4,550.6 394.2,553.5 396.0,556.4 397.9,559.3 399.8,562.1 401.7,565.0 403.6,567.8 405.6,570.6 407.6,573.5 409.6,576.3 411.6,579.1 413.7,581.9 415.7,584.7 417.8,587.5 420.0,590.2 422.1,593.0 424.3,595.7 426.5,598.5 428.8,601.2 431.0,603.9 433.3,606.6 435.7,609.3 438.0,612.0 440.4,614.7 442.8,617.3 445.2,619.9 447.7,622.6 450.2,625.2 452.7,627.8 455.2,630.4 457.8,633.0 460.4,635.5 463.1,638.1 465.7,640.6 468.4,643.1 471.2,645.6 473.9,648.1 476.7,650.6 479.5,653.1 482.3,655.6 485.2,658.1 488.1,660.5 490.9,663.0 493.9,665.5 496.8,667.9 499.8,670.4 502.7,672.8 505.8,675.2 508.8,677.7 511.8,680.1 514.9,682.5 518.0,685.0 521.1,687.4 524.2,689.8 527.4,692.2 530.6,694.6 533.8,697.0 537.0,699.4 540.3,701.8 543.5,704.1 546.8,706.5 550.2,708.8 553.6,711.2 557.0,713.5 560.4,715.8 563.9,718.1 567.4,720.4 570.9,722.6 574.5,724.8 578.1,727.1 581.8,729.3 585.5,731.4 589.2,733.6 593.0,735.8 596.7,737.9 600.5,740.1 604.4,742.2 608.2,744.3 612.1,746.5 616.0,748.6 619.9,750.7 623.9,752.8 627.9,754.9" fill="none" stroke="#800000" stroke-width="1" stroke-linejoin="round" />
<polyline points="423.9,27.9 422.1,32.8 420.3,37.7 418.6,42.6 416.9,47.5 415.2,52.4 413.6,57.2 411.9,62.1 410.3,66.9 408.7,71.7 407.1,76.5 405.6,81.3 404.1,86.1 402.6,90.8 401.1,95.6 399.7,100.3 398.3,104.9 397.0,109.6 395.6,114.3 394.3,118.9 393.1,123.5 391.8,128.1 390.6,132.7 389.4,137.3 388.2,141.8 387.1,146.3 386.0,150.8 384.9,155.3 383.9,159.8 382.9,164.2 381.9,168.7 380.9,173.1 380.0,177.5 379.1,181.9 378.2,186.2 377.4,190.6 376.5,194.9 375.7,199.2 375.0,203.5 374.3,207.8 373.5,212.1 372.9,216.3 372.2,220.5 371.6,224.7 371.0,228.9 370.5,233.1 369.9,237.3 369.4,241.4 368.9,245.5 368.5,249.6 368.1,253.7 367.7,257.8 367.3,261.9 367.0,265.9 366.7,269.9 366.4,273.9 366.2,277.9 365.9,281.9 365.8,285.9 365.6,289.8 365.5,293.7 365.4,297.6 365.3,301.5 365.2,305.4 365.2,309.3 365.2,313.1 365.3,316.9 365.3,320.7 365.4,324.5 365.5,328.3 365.7,332.1 365.9,335.8 366.1,339.6 366.3,343.3 366.6,347.0 366.9,350.6 367.2,354.3 367.5,358.0 367.9,361.6 368.3,365.2 368.8,368.8 369.2,372.4 369.7,376.0 370.2,379.5 370.8,383.1 371.4,386.6 372.0,390.1 372.6,393.6 373.3,397.1 374.0,400.5 374.7,404.0 375.4,407.4 376.2,410.8 377.0,414.2 377.9,417.6 378.7,421.0 379.6,424.3 380.5,427.7 381.5,431.0 382.5,434.3 383.5,437.6 384.5,440.9 385.6,444.1 386.7,447.4 387.8,450.6 389.0,453.8 390.2,457.0 391.4,460.2 392.6,463.4 393.9,466.5 395.2,469.7 396.5,472.8 397.9,475.9 399.3,479.0 400.7,482.1 402.1,485.2 403.5,488.3 405.0,491.3 406.5,494.4 408.1,497.4 409.6,500.4 411.2,503.5 412.8,506.5 414.4,509.5 416.1,512.5 417.8,515.4 419.5,518.4 421.2,521.4 422.9,524.3 424.7,527.3 426.5,530.2 428.3,533.2 430.1,536.1 432.0,539.0 433.9,541.9 435.8,544.8 437.7,547.7 439.6,550.6 441.6,553.5 443.6,556.4 445.6,559.3 447.7,562.1 449.7,565.0 451.8,567.8 453.9,570.6 456.1,573.5 458.2,576.3 460.4,579.1 462.6,581.9 464.9,584.7 467.1,587.5 469.4,590.2 471.7,593.0 474.1,595.7 476.4,598.5 478.8,601.2 481.3,603.9 483.7,606.6 486.2,609.3 488.7,612.0 491.2,614.7 493.8,617.3 496.4,619.9 499.0,622.6 501.7,625.2 504.4,627.8 507.1,630.4 509.8,633.0 512.6,635.5 515.4,638.1 518.3,640.6 521.1,643.1 524.0,645.6 526.9,648.1 529.9,650.6 532.8,653.1 535.8,655.6 538.9,658.1 541.9,660.5 545.0,663.0 548.1,665.5 551.2,667.9 554.3,670.4 557.5,672.8 560.6,675.2 563.8,677.7 567.1,680.1 570.3,682.5 573.6,685.0 576.9,687.4 580.2,689.8 583.5,692.2 586.9,694.6 590.3,697.0 593.7,699.4 597.1,701.8 600.6,704.1 604.0,706.5 607.6,708.8 611.1,711.2 614.7,713.5 618.3,715.8 622.0,718.1 625.7,720.4 629.4,722.6 633.2,724.8 637.0,727.1 640.8,729.3 644.7,731.4 648.6,733.6 652.6,735.8 656.5,737.9 660.5,740.1 664.5,742.2 668.6,744.3 672.6,746.5 676.7,748.6 680.9,750.7 685.0,752.8 689.2,754.9" fill="none" stroke="#800000" stroke-width="1" stroke-linejoin="round" />
<polyline points="454.5,27.9 452.8,32.8 451.2,37.7 449.5,42.6 447.9,47.5 446.4,52.4 444.8,57.2 443.2,62.1 441.7,66.9 440.2,71.7 438.7,76.5 437.3,81.3 435.9,86.1 434.5,90.8 433.2,95.6 431.8,100.3 430.6,104.9 429.3,109.6 428.1,114.3 426.9,118.9 425.7,123.5 424.5,128.1 423.4,132.7 422.3,137.3 421.3,141.8 420.3,146.3 419.3,150.8 418.3,155.3 417.3,159.8 416.4,164.2 415.6,168.7 414.7,173.1 413.9,177.5 413.1,181.9 412.3,186.2 411.6,190.6 410.9,194.9 410.2,199.2 409.5,203.5 408.9,207.8 408.3,212.1 407.8,216.3 407.2,220.5 406.7,224.7 406.2,228.9 405.8,233.1 405.4,237.3 405.0,241.4 404.6,245.5 404.3,249.6 404.0,253.7 403.7,257.8 403.4,261.9 403.2,265.9 403.0,269.9 402.9,273.9 402.7,277.9 402.6,281.9 402.6,285.9 402.5,289.8 402.5,293.7 402.5,297.6 402.6,301.5 402.6,305.4 402.7,309.3 402.9,313.1 403.0,316.9 403.2,320.7 403.4,324.5 403.6,328.3 403.9,332.1 404.2,335.8 404.5,339.6 404.9,343.3 405.3,347.0 405.7,350.6 406.2,354.3 406.6,358.0 407.1,361.6 407.7,365.2 408.2,368.8 408.8,372.4 409.4,376.0 410.1,379.5 410.8,383.1 411.5,386.6 412.2,390.1 413.0,393.6 413.8,397.1 414.6,400.5 415.4,404.0 416.3,407.4 417.2,410.8 418.2,414.2 419.1,417.6 420.1,421.0 421.1,424.3 422.2,427.7 423.3,431.0 424.4,434.3 425.6,437.6 426.7,440.9 427.9,444.1 429.2,447.4 430.4,450.6 431.7,453.8 433.0,457.0 434.4,460.2 435.8,463.4 437.2,466.5 438.6,469.7 440.1,472.8 441.6,475.9 443.1,479.0 444.6,482.1 446.2,485.2 447.8,488.3 449.4,491.3 451.1,494.4 452.7,497.4 454.4,500.4 456.2,503.5 457.9,506.5 459.7,509.5 461.5,512.5 463.3,515.4 465.1,518.4 467.0,521.4 468.9,524.3 470.8,527.3 472.7,530.2 474.7,533.2 476.7,536.1 478.7,539.0 480.7,541.9 482.8,544.8 484.8,547.7 486.9,550.6 489.1,553.5 491.2,556.4 493.4,559.3 495.6,562.1 497.8,565.0 500.0,567.8 502.3,570.6 504.6,573.5 506.9,576.3 509.2,579.1 511.6,581.9 514.0,584.7 516.4,587.5 518.9,590.2 521.3,593.0 523.8,595.7 526.4,598.5 528.9,601.2 531.5,603.9 534.1,606.6 536.7,609.3 539.4,612.0 542.1,614.7 544.8,617.3 547.6,619.9 550.4,622.6 553.2,625.2 556.1,627.8 558.9,630.4 561.8,633.0 564.8,635.5 567.8,638.1 570.8,640.6 573.8,643.1 576.9,645.6 579.9,648.1 583.1,650.6 586.2,653.1 589.4,655.6 592.5,658.1 595.8,660.5 599.0,663.0 602.3,665.5 605.5,667.9 608.9,670.4 612.2,672.8 615.5,675.2 618.9,677.7 622.3,680.1 625.7,682.5 629.2,685.0 632.6,687.4 636.1,689.8 639.6,692.2 643.2,694.6 646.7,697.0 650.3,699.4 653.9,701.8 657.6,704.1 661.2,706.5 665.0,708.8 668.7,711.2 672.5,713.5 676.3,715.8 680.1,718.1 684.0,720.4 687.9,722.6 691.9,724.8 695.9,727.1 699.9,729.3 703.9,731.4 708.0,733.6 712.2,735.8 716.3,737.9 720.5,740.1 724.7,742.2 728.9,744.3 733.2,746.5 737.5,748.6 741.8,750.7 746.1,752.8 750.5,754.9" fill="none" stroke="#800000" stroke-width="1" stroke-linejoin="round" />
<polyline points="485.1,27.9 483.5,32.8 482.0,37.7 480.4,42.6 479.0,47.5 477.5,52.4 476.0,57.2 474.5,62.1 473.1,66.9 471.7,71.7 470.3,76.5 469.0,81.3 467.7,86.1 466.4,90.8 465.2,95.6 464.0,100.3 462.8,104.9 461.6,109.6 460.5,114.3 459.4,118.9 458.3,123.5 457.3,128.1 456.3,132.7 455.3,137.3 454.3,141.8 453.4,146.3 452.5,150.8 451.7,155.3 450.8,159.8 450.0,164.2 449.2,168.7 448.5,173.1 447.8,177.5 447.1,181.9 446.4,186.2 445.8,190.6 445.2,194.9 444.6,199.2 444.1,203.5 443.6,207.8 443.1,212.1 442.6,216.3 442.2,220.5 441.8,224.7 441.4,228.9 441.1,233.1 440.8,237.3 440.5,241.4 440.3,245.5 440.0,249.6 439.9,253.7 439.7,257.8 439.6,261.9 439.5,265.9 439.4,269.9 439.3,273.9 439.3,277.9 439.3,281.9 439.4,285.9 439.4,289.8 439.5,293.7 439.7,297.6 439.8,301.5 440.0,305.4 440.2,309.3 440.5,313.1 440.8,316.9 441.1,320.7 441.4,324.5 441.8,328.3 442.2,332.1 442.6,335.8 443.0,339.6 443.5,343.3 444.0,347.0 444.6,350.6 445.1,354.3 445.7,358.0 446.3,361.6 447.0,365.2 447.7,368.8 448.4,372.4 449.1,376.0 449.9,379.5 450.7,383.1 451.6,386.6 452.4,390.1 453.3,393.6 454.2,397.1 455.2,400.5 456.2,404.0 457.2,407.4 458.2,410.8 459.3,414.2 460.4,417.6 461.5,421.0 462.7,424.3 463.9,427.7 465.1,431.0 466.3,434.3 467.6,437.6 468.9,440.9 470.3,444.1 471.6,447.4 473.0,450.6 474.4,453.8 475.9,457.0 477.4,460.2 478.9,463.4 480.4,466.5 482.0,469.7 483.6,472.8 485.2,475.9 486.9,479.0 488.6,482.1 490.3,485.2 492.0,488.3 493.8,491.3 495.6,494.4 497.4,497.4 499.2,500.4 501.1,503.5 503.0,506.5 504.9,509.5 506.9,512.5 508.8,515.4 510.8,518.4 512.8,521.4 514.9,524.3 516.9,527.3 519.0,530.2 521.1,533.2 523.2,536.1 525.4,539.0 527.6,541.9 529.8,544.8 532.0,547.7 534.2,550.6 536.5,553.5 538.8,556.4 541.1,559.3 543.4,562.1 545.8,565.0 548.2,567.8 550.6,570.6 553.1,573.5 555.5,576.3 558.0,579.1 560.6,581.9 563.1,584.7 565.7,587.5 568.3,590.2 570.9,593.0 573.6,595.7 576.3,598.5 579.0,601.2 581.7,603.9 584.5,606.6 587.3,609.3 590.1,612.0 593.0,614.7 595.9,617.3 598.8,619.9 601.7,622.6 604.7,625.2 607.7,627.8 610.8,630.4 613.9,633.0 617.0,635.5 620.1,638.1 623.3,640.6 626.5,643.1 629.7,645.6 632.9,648.1 636.2,650.6 639.5,653.1 642.9,655.6 646.2,658.1 649.6,660.5 653.0,663.0 656.5,665.5 659.9,667.9 663.4,670.4 666.9,672.8 670.4,675.2 674.0,677.7 677.5,680.1 681.1,682.5 684.8,685.0 688.4,687.4 692.1,689.8 695.8,692.2 699.5,694.6 703.2,697.0 707.0,699.4 710.8,701.8 714.6,704.1 718.4,706.5 722.3,708.8 726.3,711.2 730.2,713.5 734.2,715.8 738.2,718.1 742.3,720.4 746.4,722.6 750.5,724.8 754.7,727.1 758.9,729.3 763.2,731.4 767.5,733.6 771.8,735.8 776.1,737.9 780.5,740.1 784.9,742.2 789.3,744.3 793.8,746.5 798.2,748.6 802.8,750.7 807.3,752.8 811.9,754.9" fill="none" stroke="#800000" stroke-width="1" stroke-linejoin="round" />
<polyline points="515.7,27.9 514.3,32.8 512.8,37.7 511.4,42.6 510.0,47.5 508.6,52.4 507.2,57.2 505.8,62.1 504.5,66.9 503.2,71.7 502.0,76.5 500.7,81.3 499.5,86.1 498.3,90.8 497.2,95.6 496.1,100.3 495.0,104.9 493.9,109.6 492.9,114.3 491.9,118.9 490.9,123.5 490.0,128.1 489.1,132.7 488.2,137.3 487.4,141.8 486.6,146.3 485.8,150.8 485.0,155.3 484.3,159.8 483.6,164.2 482.9,168.7 482.3,173.1 481.7,177.5 481.1,181.9 480.5,186.2 480.0,190.6 479.5,194.9 479.1,199.2 478.6,203.5 478.2,207.8 477.9,212.1 477.5,216.3 477.2,220.5 476.9,224.7 476.7,228.9 476.4,233.1 476.2,237.3 476.1,241.4 475.9,245.5 475.8,249.6 475.7,253.7 475.7,257.8 475.7,261.9 475.7,265.9 475.7,269.9 475.8,273.9 475.9,277.9 476.0,281.9 476.2,285.9 476.4,289.8 476.6,293.7 476.8,297.6 477.1,301.5 477.4,305.4 477.8,309.3 478.1,313.1 478.5,316.9 478.9,320.7 479.4,324.5 479.9,328.3 480.4,332.1 480.9,335.8 481.5,339.6 482.1,343.3 482.7,347.0 483.4,350.6 484.1,354.3 484.8,358.0 485.6,361.6 486.3,365.2 487.2,368.8 488.0,372.4 488.9,376.0 489.8,379.5 490.7,383.1 491.7,386.6 492.7,390.1 493.7,393.6 494.7,397.1 495.8,400.5 496.9,404.0 498.0,407.4 499.2,410.8 500.4,414.2 501.6,417.6 502.9,421.0 504.2,424.3 505.5,427.7 506.9,431.0 508.2,434.3 509.7,437.6 511.1,440.9 512.6,444.1 514.1,447.4 515.6,450.6 517.2,453.8 518.8,457.0 520.4,460.2 522.0,463.4 523.7,466.5 525.4,469.7 527.2,472.8 528.9,475.9 530.7,479.0 532.5,482.1 534.4,485.2 536.3,488.3 538.2,491.3 540.1,494.4 542.1,497.4 544.0,500.4 546.1,503.5 548.1,506.5 550.2,509.5 552.2,512.5 554.3,515.4 556.5,518.4 558.6,521.4 560.8,524.3 563.0,527.3 565.3,530.2 567.5,533.2 569.8,536.1 572.1,539.0 574.4,541.9 576.7,544.8 579.1,547.7 581.5,550.6 583.9,553.5 586.4,556.4 588.8,559.3 591.3,562.1 593.9,565.0 596.4,567.8 599.0,570.6 601.6,573.5 604.2,576.3 606.9,579.1 609.5,581.9 612.2,584.7 615.0,587.5 617.7,590.2 620.5,593.0 623.3,595.7 626.2,598.5 629.0,601.2 631.9,603.9 634.9,606.6 637.8,609.3 640.8,612.0 643.8,614.7 646.9,617.3 650.0,619.9 653.1,622.6 656.2,625.2 659.4,627.8 662.6,630.4 665.9,633.0 669.1,635.5 672.4,638.1 675.8,640.6 679.1,643.1 682.5,645.6 686.0,648.1 689.4,650.6 692.9,653.1 696.4,655.6 699.9,658.1 703.5,660.5 707.1,663.0 710.7,665.5 714.3,667.9 717.9,670.4 721.6,672.8 725.3,675.2 729.0,677.7 732.8,680.1 736.6,682.5 740.3,685.0 744.2,687.4 748.0,689.8 751.9,692.2 755.8,694.6 759.7,697.0 763.6,699.4 767.6,701.8 771.6,704.1 775.7,706.5 779.7,708.8 783.8,711.2 788.0,713.5 792.1,715.8 796.3,718.1 800.6,720.4 804.9,722.6 809.2,724.8 813.6,727.1 818.0,729.3 822.4,731.4 826.9,733.6 831.4,735.8 835.9,737.9 840.5,740.1 845.1,742.2 849.7,744.3 854.3,746.5 859.0,748.6 863.7,750.7 868.4,752.8 873.2,754.9" fill="none" stroke="#800000" stroke-width="1" stroke-linejoin="round" />
<polyline points="546.4,27.9 545.0,32.8 543.6,37.7 542.3,42.6 541.0,47.5 539.7,52.4 538.4,57.2 537.2,62.1 535.9,66.9 534.7,71.7 533.6,76.5 532.4,81.3 531.3,86.1 530.3,90.8 529.2,95.6 528.2,100.3 527.2,104.9 526.3,109.6 525.3,114.3 524.4,118.9 523.6,123.5 522.7,128.1 521.9,132.7 521.2,137.3 520.4,141.8 519.7,146.3 519.0,150.8 518.4,155.3 517.8,159.8 517.2,164.2 516.6,168.7 516.1,173.1 515.6,177.5 515.1,181.9 514.6,186.2 514.2,190.6 513.9,194.9 513.5,199.2 513.2,203.5 512.9,207.8 512.6,212.1 512.4,216.3 512.2,220.5 512.0,224.7 511.9,228.9 511.8,233.1 511.7,237.3 511.6,241.4 511.6,245.5 511.6,249.6 511.6,253.7 511.7,257.8 511.8,261.9 511.9,265.9 512.1,269.9 512.3,273.9 512.5,277.9 512.7,281.9 513.0,285.9 513.3,289.8 513.6,293.7 514.0,297.6 514.4,301.5 514.8,305.4 515.3,309.3 515.8,313.1 516.3,316.9 516.8,320.7 517.4,324.5 518.0,328.3 518.6,332.1 519.3,335.8 520.0,339.6 520.7,343.3 521.5,347.0 522.3,350.6 523.1,354.3 523.9,358.0 524.8,361.6 525.7,365.2 526.6,368.8 527.6,372.4 528.6,376.0 529.6,379.5 530.7,383.1 531.8,386.6 532.9,390.1 534.0,393.6 535.2,397.1 536.4,400.5 537.6,404.0 538.9,407.4 540.2,410.8 541.5,414.2 542.9,417.6 544.3,421.0 545.7,424.3 547.2,427.7 548.7,431.0 550.2,434.3 551.7,437.6 553.3,440.9 554.9,444.1 556.5,447.4 558.2,450.6 559.9,453.8 561.6,457.0 563.4,460.2 565.2,463.4 567.0,466.5 568.8,469.7 570.7,472.8 572.6,475.9 574.6,479.0 576.5,482.1 578.5,485.2 580.5,488.3 582.6,491.3 584.6,494.4 586.7,497.4 588.9,500.4 591.0,503.5 593.2,506.5 595.4,509.5 597.6,512.5 599.9,515.4 602.1,518.4 604.4,521.4 606.8,524.3 609.1,527.3 611.5,530.2 613.9,533.2 616.3,536.1 618.8,539.0 621.2,541.9 623.7,544.8 626.3,547.7 628.8,550.6 631.4,553.5 634.0,556.4 636.6,559.3 639.2,562.1 641.9,565.0 644.6,567.8 647.3,570.6 650.1,573.5 652.9,576.3 655.7,579.1 658.5,581.9 661.4,584.7 664.2,587.5 667.2,590.2 670.1,593.0 673.1,595.7 676.1,598.5 679.1,601.2 682.2,603.9 685.3,606.6 688.4,609.3 691.5,612.0 694.7,614.7 697.9,617.3 701.2,619.9 704.4,622.6 707.8,625.2 711.1,627.8 714.5,630.4 717.9,633.0 721.3,635.5 724.8,638.1 728.3,640.6 731.8,643.1 735.4,645.6 739.0,648.1 742.6,650.6 746.2,653.1 749.9,655.6 753.6,658.1 757.3,660.5 761.1,663.0 764.9,665.5 768.7,667.9 772.5,670.4 776.3,672.8 780.2,675.2 784.1,677.7 788.0,680.1 792.0,682.5 795.9,685.0 799.9,687.4 804.0,689.8 808.0,692.2 812.1,694.6 816.2,697.0 820.3,699.4 824.5,701.8 828.6,704.1 832.9,706.5 837.1,708.8 841.4,711.2 845.7,713.5 850.1,715.8 854.4,718.1 858.9,720.4 863.4,722.6 867.9,724.8 872.4,727.1 877.0,729.3 881.6,731.4 886.3,733.6 891.0,735.8 895.7,737.9 900.5,740.1 905.3,742.2 910.1,744.3 914.9,746.5 919.8,748.6 924.6,750.7 929.6,752.8 934.5,754.9" fill="none" stroke="#800000" stroke-width="1" stroke-linejoin="round" />
<polyline points="577.0,27.9 575.7,32.8 574.4,37.7 573.2,42.6 572.0,47.5 570.8,52.4 569.6,57.2 568.5,62.1 567.3,66.9 566.2,71.7 565.2,76.5 564.1,81.3 563.1,86.1 562.2,90.8 561.2,95.6 560.3,100.3 559.4,104.9 558.6,109.6 557.8,114.3 557.0,118.9 556.2,123.5 555.5,128.1 554.8,132.7 554.1,137.3 553.5,141.8 552.9,146.3 552.3,150.8 551.7,155.3 551.2,159.8 550.7,164.2 550.3,168.7 549.9,173.1 549.5,177.5 549.1,181.9 548.8,186.2 548.5,190.6 548.2,194.9 547.9,199.2 547.7,203.5 547.5,207.8 547.4,212.1 547.3,216.3 547.2,220.5 547.1,224.7 547.1,228.9 547.1,233.1 547.1,237.3 547.2,241.4 547.3,245.5 547.4,249.6 547.5,253.7 547.7,257.8 547.9,261.9 548.1,265.9 548.4,269.9 548.7,273.9 549.1,277.9 549.4,281.9 549.8,285.9 550.2,289.8 550.7,293.7 551.2,297.6 551.7,301.5 552.2,305.4 552.8,309.3 553.4,313.1 554.0,316.9 554.7,320.7 555.4,324.5 556.1,328.3 556.9,332.1 557.7,335.8 558.5,339.6 559.3,343.3 560.2,347.0 561.1,350.6 562.0,354.3 563.0,358.0 564.0,361.6 565.0,365.2 566.1,368.8 567.2,372.4 568.3,376.0 569.5,379.5 570.6,383.1 571.9,386.6 573.1,390.1 574.4,393.6 575.7,397.1 577.0,400.5 578.4,404.0 579.8,407.4 581.2,410.8 582.7,414.2 584.2,417.6 585.7,421.0 587.2,424.3 588.8,427.7 590.4,431.0 592.1,434.3 593.8,437.6 595.5,440.9 597.2,444.1 599.0,447.4 600.8,450.6 602.6,453.8 604.5,457.0 606.4,460.2 608.3,463.4 610.3,466.5 612.2,469.7 614.3,472.8 616.3,475.9 618.4,479.0 620.5,482.1 622.6,485.2 624.8,488.3 626.9,491.3 629.2,494.4 631.4,497.4 633.7,500.4 636.0,503.5 638.3,506.5 640.6,509.5 643.0,512.5 645.4,515.4 647.8,518.4 650.3,521.4 652.7,524.3 655.2,527.3 657.8,530.2 660.3,533.2 662.9,536.1 665.5,539.0 668.1,541.9 670.7,544.8 673.4,547.7 676.1,550.6 678.8,553.5 681.6,556.4 684.3,559.3 687.1,562.1 690.0,565.0 692.8,567.8 695.7,570.6 698.6,573.5 701.5,576.3 704.5,579.1 707.5,581.9 710.5,584.7 713.5,587.5 716.6,590.2 719.7,593.0 722.8,595.7 726.0,598.5 729.2,601.2 732.4,603.9 735.7,606.6 738.9,609.3 742.2,612.0 745.6,614.7 749.0,617.3 752.4,619.9 755.8,622.6 759.3,625.2 762.8,627.8 766.3,630.4 769.9,633.0 773.5,635.5 777.1,638.1 780.8,640.6 784.5,643.1 788.2,645.6 792.0,648.1 795.8,650.6 799.6,653.1 803.4,655.6 807.3,658.1 811.2,660.5 815.1,663.0 819.1,665.5 823.0,667.9 827.0,670.4 831.0,672.8 835.1,675.2 839.2,677.7 843.3,680.1 847.4,682.5 851.5,685.0 855.7,687.4 859.9,689.8 864.1,692.2 868.4,694.6 872.7,697.0 877.0,699.4 881.3,701.8 885.7,704.1 890.1,706.5 894.5,708.8 898.9,711.2 903.4,713.5 908.0,715.8 912.6,718.1 917.2,720.4 921.8,722.6 926.5,724.8 931.3,727.1 936.1,729.3 940.9,731.4 945.7,733.6 950.6,735.8 955.5,737.9 960.5,740.1 965.4,742.2 970.4,744.3 975.4,746.5 980.5,748.6 985.6,750.7 990.7,752.8 995.9,754.9" fill="none" stroke="#800000" stroke-width="1" stroke-linejoin="round" />
<polyline points="52.5,237.3 50.9,241.4 49.5,245.5 48.0,249.6 46.6,253.7 45.1,257.8 43.8,261.9 42.4,265.9 41.0,269.9 39.7,273.9 38.4,277.9 37.2,281.9 35.9,285.9 34.7,289.8 33.5,293.7 32.4,297.6 31.2,301.5 30.1,305.4 29.0,309.3 28.0,313.1 26.9,316.9 25.9,320.7 24.9,324.5 24.0,328.3 23.0,332.1 22.1,335.8 21.2,339.6 20.4,343.3 19.5,347.0 18.7,350.6 17.9,354.3 17.2,358.0 16.4,361.6 15.7,365.2 15.0,368.8 14.4,372.4 13.7,376.0 13.1,379.5 12.5,383.1 12.0,386.6 11.5,390.1 10.9,393.6 10.5,397.1 10.0,400.5 9.6,404.0 9.1,407.4 8.8,410.8 8.4,414.2 8.1,417.6 7.7,421.0 7.5,424.3 7.2,427.7 7.0,431.0 6.8,434.3 6.6,437.6 6.4,440.9 6.3,444.1 6.2,447.4 6.1,450.6 6.0,453.8 6.0,457.0 6.0,460.2 6.0,463.4 6.0,466.5 6.1,469.7 6.2,472.8 6.3,475.9 6.4,479.0 6.6,482.1 6.8,485.2 6.9,488.3 7.2,491.3 7.4,494.4 7.7,497.4 8.0,500.4 8.3,503.5 8.6,506.5 8.9,509.5 9.3,512.5 9.7,515.4 10.1,518.4 10.5,521.4 10.9,524.3 11.4,527.3 11.8,530.2 12.3,533.2 12.8,536.1 13.4,539.0 13.9,541.9 14.5,544.8 15.1,547.7 15.7,550.6 16.3,553.5 16.9,556.4 17.6,559.3 18.2,562.1 18.9,565.0 19.7,567.8 20.4,570.6 21.2,573.5 21.9,576.3 22.7,579.1 23.5,581.9 24.4,584.7 25.2,587.5 26.1,590.2 27.0,593.0 28.0,595.7 28.9,598.5 29.9,601.2 30.9,603.9 31.9,606.6 32.9,609.3 34.0,612.0 35.1,614.7 36.2,617.3 37.3,619.9 38.5,622.6 39.7,625.2 40.9,627.8 42.1,630.4 43.4,633.0 44.6,635.5 46.0,638.1 47.3,640.6 48.6,643.1 50.0,645.6 51.4,648.1 52.9,650.6 54.3,653.1 55.8,655.6 57.2,658.1 58.7,660.5 60.3,663.0 61.8,665.5 63.3,667.9 64.9,670.4 66.5,672.8 68.1,675.2 69.7,677.7 71.3,680.1 73.0,682.5 74.6,685.0 76.3,687.4 78.0,689.8 79.7,692.2 81.4,694.6 83.2,697.0 84.9,699.4 86.7,701.8 88.5,704.1 90.3,706.5 92.2,708.8 94.0,711.2 95.9,713.5 97.8,715.8 99.8,718.1 101.8,720.4 103.8,722.6 105.8,724.8 107.9,727.1 109.9,729.3 112.0,731.4 114.2,733.6 116.3,735.8 118.5,737.9 120.7,740.1 122.8,742.2 125.0,744.3 127.2,746.5 129.5,748.6 131.7,750.7 134.0,752.8 136.2,754.9" fill="none" stroke="#000080" stroke-width="1" stroke-linejoin="round" />
<polyline points="112.0,177.5 110.2,181.9 108.5,186.2 106.8,190.6 105.1,194.9 103.4,199.2 101.8,203.5 100.2,207.8 98.6,212.1 97.1,216.3 95.5,220.5 94.0,224.7 92.6,228.9 91.1,233.1 89.7,237.3 88.3,241.4 86.9,245.5 85.6,249.6 84.3,253.7 83.0,257.8 81.7,261.9 80.5,265.9 79.2,269.9 78.0,273.9 76.9,277.9 75.7,281.9 74.6,285.9 73.5,289.8 72.5,293.7 71.4,297.6 70.4,301.5 69.4,305.4 68.5,309.3 67.5,313.1 66.6,316.9 65.7,320.7 64.9,324.5 64.0,328.3 63.2,332.1 62.4,335.8 61.7,339.6 60.9,343.3 60.2,347.0 59.5,350.6 58.9,354.3 58.3,358.0 57.6,361.6 57.1,365.2 56.5,368.8 56.0,372.4 55.5,376.0 55.0,379.5 54.5,383.1 54.1,386.6 53.7,390.1 53.3,393.6 53.0,397.1 52.7,400.5 52.4,404.0 52.1,407.4 51.8,410.8 51.6,414.2 51.4,417.6 51.2,421.0 51.1,424.3 51.0,427.7 50.9,431.0 50.8,434.3 50.7,437.6 50.7,440.9 50.7,444.1 50.8,447.4 50.8,450.6 50.9,453.8 51.0,457.0 51.1,460.2 51.3,463.4 51.5,466.5 51.7,469.7 51.9,472.8 52.2,475.9 52.5,479.0 52.8,482.1 53.1,485.2 53.4,488.3 53.8,491.3 54.2,494.4 54.6,497.4 55.0,500.4 55.5,503.5 55.9,506.5 56.4,509.5 56.9,512.5 57.5,515.4 58.0,518.4 58.6,521.4 59.2,524.3 59.8,527.3 60.4,530.2 61.1,533.2 61.7,536.1 62.4,539.0 63.1,541.9 63.8,544.8 64.6,547.7 65.3,550.6 66.1,553.5 66.9,556.4 67.7,559.3 68.5,562.1 69.4,565.0 70.3,567.8 71.2,570.6 72.1,573.5 73.0,576.3 74.0,579.1 74.9,581.9 75.9,584.7 77.0,587.5 78.0,590.2 79.1,593.0 80.2,595.7 81.3,598.5 82.4,601.2 83.5,603.9 84.7,606.6 85.9,609.3 87.1,612.0 88.4,614.7 89.7,617.3 91.0,619.9 92.3,622.6 93.6,625.2 95.0,627.8 96.4,630.4 97.8,633.0 99.3,635.5 100.7,638.1 102.2,640.6 103.8,643.1 105.3,645.6 106.9,648.1 108.4,650.6 110.0,653.1 111.7,655.6 113.3,658.1 115.0,660.5 116.6,663.0 118.3,665.5 120.0,667.9 121.7,670.4 123.5,672.8 125.2,675.2 127.0,677.7 128.7,680.1 130.5,682.5 132.3,685.0 134.1,687.4 136.0,689.8 137.8,692.2 139.7,694.6 141.5,697.0 143.4,699.4 145.3,701.8 147.2,704.1 149.2,706.5 151.1,708.8 153.1,711.2 155.1,713.5 157.1,715.8 159.1,718.1 161.2,720.4 163.3,722.6 165.4,724.8 167.5,727.1 169.7,729.3 171.8,731.4 174.0,733.6 176.2,735.8 178.4,737.9 180.7,740.1 182.9,742.2 185.1,744.3 187.3,746.5 189.5,748.6 191.8,750.7 194.0,752.8 196.3,754.9" fill="none" stroke="#000080" stroke-width="1" stroke-linejoin="round" />
<polyline points="175.6,114.3 173.6,118.9 171.6,123.5 169.7,128.1 167.7,132.7 165.8,137.3 163.9,141.8 162.1,146.3 160.3,150.8 158.5,155.3 156.7,159.8 155.0,164.2 153.3,168.7 151.6,173.1 149.9,177.5 148.3,181.9 146.7,186.2 145.1,190.6 143.5,194.9 142.0,199.2 140.5,203.5 139.0,207.8 137.5,212.1 136.1,216.3 134.7,220.5 133.3,224.7 132.0,228.9 130.7,233.1 129.4,237.3 128.1,241.4 126.9,245.5 125.6,249.6 124.4,253.7 123.3,257.8 122.1,261.9 121.0,265.9 119.9,269.9 118.9,273.9 117.8,277.9 116.8,281.9 115.8,285.9 114.9,289.8 113.9,293.7 113.0,297.6 112.1,301.5 111.3,305.4 110.5,309.3 109.7,313.1 108.9,316.9 108.1,320.7 107.4,324.5 106.7,328.3 106.0,332.1 105.4,335.8 104.8,339.6 104.2,343.3 103.6,347.0 103.0,350.6 102.5,354.3 102.0,358.0 101.6,361.6 101.1,365.2 100.7,368.8 100.3,372.4 99.9,376.0 99.6,379.5 99.3,383.1 99.0,386.6 98.7,390.1 98.5,393.6 98.3,397.1 98.1,400.5 98.0,404.0 97.8,407.4 97.7,410.8 97.6,414.2 97.6,417.6 97.6,421.0 97.6,424.3 97.6,427.7 97.6,431.0 97.7,434.3 97.8,437.6 98.0,440.9 98.1,444.1 98.3,447.4 98.5,450.6 98.7,453.8 99.0,457.0 99.3,460.2 99.6,463.4 99.9,466.5 100.3,469.7 100.7,472.8 101.1,475.9 101.5,479.0 102.0,482.1 102.4,485.2 102.9,488.3 103.5,491.3 104.0,494.4 104.6,497.4 105.2,500.4 105.8,503.5 106.4,506.5 107.0,509.5 107.7,512.5 108.4,515.4 109.1,518.4 109.9,521.4 110.6,524.3 111.4,527.3 112.2,530.2 113.0,533.2 113.8,536.1 114.6,539.0 115.5,541.9 116.4,544.8 117.3,547.7 118.2,550.6 119.1,553.5 120.1,556.4 121.1,559.3 122.1,562.1 123.1,565.0 124.1,567.8 125.2,570.6 126.3,573.5 127.4,576.3 128.5,579.1 129.6,581.9 130.8,584.7 132.0,587.5 133.2,590.2 134.4,593.0 135.6,595.7 136.9,598.5 138.2,601.2 139.5,603.9 140.9,606.6 142.2,609.3 143.6,612.0 145.0,614.7 146.4,617.3 147.9,619.9 149.4,622.6 150.9,625.2 152.4,627.8 153.9,630.4 155.5,633.0 157.1,635.5 158.7,638.1 160.4,640.6 162.0,643.1 163.7,645.6 165.4,648.1 167.1,650.6 168.9,653.1 170.6,655.6 172.4,658.1 174.2,660.5 175.9,663.0 177.7,665.5 179.6,667.9 181.4,670.4 183.2,672.8 185.1,675.2 186.9,677.7 188.8,680.1 190.7,682.5 192.5,685.0 194.4,687.4 196.3,689.8 198.2,692.2 200.1,694.6 202.1,697.0 204.0,699.4 205.9,701.8 207.9,704.1 209.8,706.5 211.8,708.8 213.8,711.2 215.8,713.5 217.8,715.8 219.8,718.1 221.9,720.4 223.9,722.6 226.0,724.8 228.0,727.1 230.1,729.3 232.2,731.4 234.3,733.6 236.4,735.8 238.6,737.9 240.7,740.1 242.8,742.2 244.8,744.3 246.9,746.5 249.0,748.6 251.1,750.7 253.2,752.8 255.2,754.9" fill="none" stroke="#000080" stroke-width="1" stroke-linejoin="round" />
<polyline points="247.9,42.6 245.7,47.5 243.4,52.4 241.2,57.2 239.0,62.1 236.8,66.9 234.7,71.7 232.6,76.5 230.5,81.3 228.4,86.1 226.4,90.8 224.3,95.6 222.4,100.3 220.4,104.9 218.5,109.6 216.6,114.3 214.7,118.9 212.8,123.5 211.0,128.1 209.2,132.7 207.4,137.3 205.7,141.8 204.0,146.3 202.3,150.8 200.6,155.3 199.0,159.8 197.4,164.2 195.8,168.7 194.3,173.1 192.7,177.5 191.2,181.9 189.8,186.2 188.3,190.6 186.9,194.9 185.5,199.2 184.1,203.5 182.8,207.8 181.5,212.1 180.2,216.3 178.9,220.5 177.7,224.7 176.5,228.9 175.3,233.1 174.1,237.3 173.0,241.4 171.9,245.5 170.8,249.6 169.8,253.7 168.8,257.8 167.8,261.9 166.8,265.9 165.8,269.9 164.9,273.9 164.0,277.9 163.2,281.9 162.3,285.9 161.5,289.8 160.7,293.7 160.0,297.6 159.2,301.5 158.5,305.4 157.9,309.3 157.2,313.1 156.6,316.9 156.0,320.7 155.4,324.5 154.9,328.3 154.3,332.1 153.8,335.8 153.4,339.6 152.9,343.3 152.5,347.0 152.1,350.6 151.8,354.3 151.4,358.0 151.1,361.6 150.8,365.2 150.6,368.8 150.3,372.4 150.1,376.0 149.9,379.5 149.8,383.1 149.7,386.6 149.6,390.1 149.5,393.6 149.4,397.1 149.4,400.5 149.4,404.0 149.5,407.4 149.5,410.8 149.6,414.2 149.7,417.6 149.8,421.0 150.0,424.3 150.2,427.7 150.4,431.0 150.7,434.3 150.9,437.6 151.2,440.9 151.6,444.1 151.9,447.4 152.3,450.6 152.7,453.8 153.1,457.0 153.6,460.2 154.1,463.4 154.6,466.5 155.1,469.7 155.6,472.8 156.2,475.9 156.8,479.0 157.5,482.1 158.1,485.2 158.8,488.3 159.5,491.3 160.2,494.4 160.9,497.4 161.7,500.4 162.5,503.5 163.3,506.5 164.1,509.5 165.0,512.5 165.8,515.4 166.7,518.4 167.6,521.4 168.5,524.3 169.5,527.3 170.4,530.2 171.4,533.2 172.4,536.1 173.4,539.0 174.5,541.9 175.5,544.8 176.6,547.7 177.7,550.6 178.8,553.5 179.9,556.4 181.1,559.3 182.3,562.1 183.4,565.0 184.7,567.8 185.9,570.6 187.1,573.5 188.4,576.3 189.7,579.1 191.0,581.9 192.3,584.7 193.6,587.5 195.0,590.2 196.4,593.0 197.8,595.7 199.2,598.5 200.7,601.2 202.1,603.9 203.6,606.6 205.1,609.3 206.6,612.0 208.2,614.7 209.7,617.3 211.3,619.9 212.9,622.6 214.5,625.2 216.2,627.8 217.8,630.4 219.5,633.0 221.2,635.5 222.9,638.1 224.6,640.6 226.4,643.1 228.1,645.6 229.9,648.1 231.7,650.6 233.5,653.1 235.3,655.6 237.1,658.1 238.9,660.5 240.7,663.0 242.5,665.5 244.3,667.9 246.2,670.4 248.0,672.8 249.8,675.2 251.6,677.7 253.5,680.1 255.3,682.5 257.1,685.0 258.9,687.4 260.8,689.8 262.6,692.2 264.4,694.6 266.2,697.0 268.0,699.4 269.8,701.8 271.6,704.1 273.4,706.5 275.2,708.8 277.0,711.2 278.9,713.5 280.7,715.8 282.5,718.1 284.3,720.4 286.1,722.6 288.0,724.8 289.8,727.1 291.6,729.3 293.4,731.4 295.3,733.6 297.1,735.8 298.9,737.9 300.7,740.1 302.5,742.2 304.2,744.3 306.0,746.5 307.7,748.6 309.5,750.7 311.2,752.8 312.9,754.9" fill="none" stroke="#000080" stroke-width="1" stroke-linejoin="round" />
<polyline points="302.2,27.9 300.0,32.8 297.9,37.7 295.8,42.6 293.7,47.5 291.6,52.4 289.5,57.2 287.5,62.1 285.5,66.9 283.5,71.7 281.5,76.5 279.6,81.3 277.6,86.1 275.8,90.8 273.9,95.6 272.1,100.3 270.3,104.9 268.5,109.6 266.8,114.3 265.0,118.9 263.4,123.5 261.7,128.1 260.1,132.7 258.4,137.3 256.9,141.8 255.3,146.3 253.8,150.8 252.3,155.3 250.8,159.8 249.4,164.2 248.0,168.7 246.6,173.1 245.2,177.5 243.9,181.9 242.6,186.2 241.3,190.6 240.0,194.9 238.8,199.2 237.6,203.5 236.4,207.8 235.3,212.1 234.2,216.3 233.1,220.5 232.0,224.7 231.0,228.9 230.0,233.1 229.0,237.3 228.0,241.4 227.1,245.5 226.2,249.6 225.3,253.7 224.5,257.8 223.7,261.9 222.9,265.9 222.1,269.9 221.4,273.9 220.7,277.9 220.0,281.9 219.3,285.9 218.7,289.8 218.1,293.7 217.5,297.6 216.9,301.5 216.4,305.4 215.9,309.3 215.5,313.1 215.0,316.9 214.6,320.7 214.2,324.5 213.8,328.3 213.5,332.1 213.2,335.8 212.9,339.6 212.7,343.3 212.4,347.0 212.2,350.6 212.1,354.3 211.9,358.0 211.8,361.6 211.7,365.2 211.6,368.8 211.6,372.4 211.6,376.0 211.6,379.5 211.6,383.1 211.7,386.6 211.8,390.1 211.9,393.6 212.1,397.1 212.3,400.5 212.5,404.0 212.7,407.4 212.9,410.8 213.2,414.2 213.5,417.6 213.9,421.0 214.2,424.3 214.6,427.7 215.0,431.0 215.5,434.3 216.0,437.6 216.5,440.9 217.0,444.1 217.5,447.4 218.1,450.6 218.7,453.8 219.3,457.0 220.0,460.2 220.7,463.4 221.4,466.5 222.1,469.7 222.9,472.8 223.7,475.9 224.5,479.0 225.3,482.1 226.2,485.2 227.0,488.3 227.9,491.3 228.8,494.4 229.8,497.4 230.7,500.4 231.7,503.5 232.7,506.5 233.7,509.5 234.8,512.5 235.8,515.4 236.9,518.4 238.0,521.4 239.1,524.3 240.3,527.3 241.4,530.2 242.6,533.2 243.7,536.1 244.9,539.0 246.1,541.9 247.4,544.8 248.6,547.7 249.9,550.6 251.1,553.5 252.4,556.4 253.7,559.3 255.1,562.1 256.4,565.0 257.7,567.8 259.1,570.6 260.5,573.5 261.9,576.3 263.3,579.1 264.7,581.9 266.1,584.7 267.6,587.5 269.0,590.2 270.5,593.0 272.0,595.7 273.5,598.5 275.0,601.2 276.5,603.9 278.0,606.6 279.6,609.3 281.1,612.0 282.7,614.7 284.2,617.3 285.8,619.9 287.4,622.6 289.0,625.2 290.6,627.8 292.2,630.4 293.8,633.0 295.5,635.5 297.1,638.1 298.7,640.6 300.4,643.1 302.0,645.6 303.6,648.1 305.3,650.6 306.9,653.1 308.5,655.6 310.2,658.1 311.8,660.5 313.4,663.0 315.0,665.5 316.6,667.9 318.2,670.4 319.7,672.8 321.3,675.2 322.8,677.7 324.4,680.1 325.9,682.5 327.4,685.0 328.9,687.4 330.4,689.8 331.8,692.2 333.3,694.6 334.7,697.0 336.1,699.4 337.6,701.8 339.0,704.1 340.3,706.5 341.7,708.8 343.1,711.2 344.5,713.5 345.9,715.8 347.2,718.1 348.6,720.4 350.0,722.6 351.3,724.8 352.7,727.1 354.0,729.3 355.4,731.4 356.7,733.6 358.1,735.8 359.4,737.9 360.7,740.1 362.0,742.2 363.3,744.3 364.5,746.5 365.8,748.6 367.0,750.7 368.3,752.8 369.5,754.9" fill="none" stroke="#000080" stroke-width="1" stroke-linejoin="round" />
<polyline points="366.3,27.9 364.3,32.8 362.4,37.7 360.5,42.6 358.6,47.5 356.7,52.4 354.9,57.2 353.0,62.1 351.2,66.9 349.4,71.7 347.7,76.5 345.9,81.3 344.2,86.1 342.6,90.8 340.9,95.6 339.3,100.3 337.7,104.9 336.2,109.6 334.6,114.3 333.1,118.9 331.7,123.5 330.2,128.1 328.8,132.7 327.4,137.3 326.0,141.8 324.7,146.3 323.4,150.8 322.1,155.3 320.9,159.8 319.7,164.2 318.5,168.7 317.3,173.1 316.2,177.5 315.0,181.9 314.0,186.2 312.9,190.6 311.9,194.9 310.9,199.2 309.9,203.5 309.0,207.8 308.1,212.1 307.2,216.3 306.3,220.5 305.5,224.7 304.7,228.9 303.9,233.1 303.2,237.3 302.4,241.4 301.7,245.5 301.1,249.6 300.4,253.7 299.8,257.8 299.3,261.9 298.7,265.9 298.2,269.9 297.7,273.9 297.2,277.9 296.8,281.9 296.3,285.9 296.0,289.8 295.6,293.7 295.3,297.6 295.0,301.5 294.7,305.4 294.4,309.3 294.2,313.1 294.0,316.9 293.8,320.7 293.7,324.5 293.6,328.3 293.5,332.1 293.4,335.8 293.4,339.6 293.4,343.3 293.4,347.0 293.5,350.6 293.6,354.3 293.7,358.0 293.8,361.6 294.0,365.2 294.1,368.8 294.4,372.4 294.6,376.0 294.9,379.5 295.2,383.1 295.5,386.6 295.8,390.1 296.2,393.6 296.6,397.1 297.0,400.5 297.5,404.0 298.0,407.4 298.5,410.8 299.0,414.2 299.6,417.6 300.1,421.0 300.8,424.3 301.4,427.7 302.1,431.0 302.7,434.3 303.5,437.6 304.2,440.9 305.0,444.1 305.8,447.4 306.6,450.6 307.4,453.8 308.3,457.0 309.2,460.2 310.1,463.4 311.0,466.5 311.9,469.7 312.9,472.8 313.9,475.9 314.9,479.0 315.9,482.1 317.0,485.2 318.1,488.3 319.1,491.3 320.2,494.4 321.4,497.4 322.5,500.4 323.6,503.5 324.8,506.5 325.9,509.5 327.1,512.5 328.3,515.4 329.5,518.4 330.7,521.4 331.9,524.3 333.2,527.3 334.4,530.2 335.6,533.2 336.9,536.1 338.1,539.0 339.4,541.9 340.6,544.8 341.9,547.7 343.1,550.6 344.4,553.5 345.7,556.4 346.9,559.3 348.2,562.1 349.5,565.0 350.7,567.8 352.0,570.6 353.3,573.5 354.5,576.3 355.8,579.1 357.0,581.9 358.3,584.7 359.6,587.5 360.8,590.2 362.0,593.0 363.3,595.7 364.5,598.5 365.8,601.2 367.0,603.9 368.2,606.6 369.4,609.3 370.6,612.0 371.8,614.7 373.0,617.3 374.2,619.9 375.4,622.6 376.6,625.2 377.8,627.8 378.9,630.4 380.1,633.0 381.2,635.5 382.4,638.1 383.5,640.6 384.6,643.1 385.8,645.6 386.9,648.1 388.0,650.6 389.1,653.1 390.1,655.6 391.2,658.1 392.2,660.5 393.3,663.0 394.3,665.5 395.3,667.9 396.2,670.4 397.2,672.8 398.1,675.2 399.1,677.7 400.0,680.1 400.9,682.5 401.8,685.0 402.7,687.4 403.5,689.8 404.4,692.2 405.2,694.6 406.0,697.0 406.8,699.4 407.6,701.8 408.4,704.1 409.2,706.5 409.9,708.8 410.7,711.2 411.5,713.5 412.2,715.8 413.0,718.1 413.8,720.4 414.5,722.6 415.3,724.8 416.1,727.1 416.9,729.3 417.7,731.4 418.4,733.6 419.2,735.8 420.0,737.9 420.7,740.1 421.5,742.2 422.2,744.3 423.0,746.5 423.7,748.6 424.4,750.7 425.1,752.8 425.9,754.9" fill="none" stroke="#000080" stroke-width="1" stroke-linejoin="round" />
<polyline points="461.6,27.9 459.9,32.8 458.3,37.7 456.7,42.6 455.1,47.5 453.6,52.4 452.0,57.2 450.5,62.1 449.0,66.9 447.5,71.7 446.0,76.5 444.6,81.3 443.2,86.1 441.9,90.8 440.6,95.6 439.3,100.3 438.0,104.9 436.7,109.6 435.5,114.3 434.3,118.9 433.2,123.5 432.1,128.1 431.0,132.7 429.9,137.3 428.9,141.8 427.9,146.3 426.9,150.8 425.9,155.3 425.0,159.8 424.1,164.2 423.2,168.7 422.4,173.1 421.6,177.5 420.8,181.9 420.1,186.2 419.4,190.6 418.7,194.9 418.0,199.2 417.4,203.5 416.8,207.8 416.2,212.1 415.6,216.3 415.1,220.5 414.6,224.7 414.1,228.9 413.7,233.1 413.3,237.3 412.9,241.4 412.6,245.5 412.2,249.6 411.9,253.7 411.7,257.8 411.4,261.9 411.2,265.9 411.0,269.9 410.9,273.9 410.7,277.9 410.6,281.9 410.6,285.9 410.5,289.8 410.5,293.7 410.5,297.6 410.5,301.5 410.6,305.4 410.6,309.3 410.8,313.1 410.9,316.9 411.0,320.7 411.2,324.5 411.4,328.3 411.7,332.1 411.9,335.8 412.2,339.6 412.5,343.3 412.8,347.0 413.2,350.6 413.6,354.3 414.0,358.0 414.4,361.6 414.8,365.2 415.3,368.8 415.8,372.4 416.3,376.0 416.8,379.5 417.4,383.1 417.9,386.6 418.5,390.1 419.1,393.6 419.7,397.1 420.4,400.5 421.0,404.0 421.7,407.4 422.4,410.8 423.1,414.2 423.8,417.6 424.5,421.0 425.3,424.3 426.0,427.7 426.8,431.0 427.6,434.3 428.4,437.6 429.2,440.9 430.0,444.1 430.8,447.4 431.6,450.6 432.4,453.8 433.3,457.0 434.1,460.2 434.9,463.4 435.8,466.5 436.6,469.7 437.5,472.8 438.3,475.9 439.2,479.0 440.0,482.1 440.8,485.2 441.7,488.3 442.5,491.3 443.3,494.4 444.2,497.4 445.0,500.4 445.8,503.5 446.6,506.5 447.3,509.5 448.1,512.5 448.9,515.4 449.6,518.4 450.4,521.4 451.1,524.3 451.8,527.3 452.5,530.2 453.2,533.2 453.9,536.1 454.5,539.0 455.2,541.9 455.8,544.8 456.4,547.7 457.0,550.6 457.6,553.5 458.2,556.4 458.7,559.3 459.3,562.1 459.8,565.0 460.3,567.8 460.8,570.6 461.3,573.5 461.8,576.3 462.3,579.1 462.7,581.9 463.2,584.7 463.6,587.5 464.0,590.2 464.5,593.0 464.9,595.7 465.3,598.5 465.7,601.2 466.0,603.9 466.4,606.6 466.8,609.3 467.1,612.0 467.5,614.7 467.9,617.3 468.2,619.9 468.5,622.6 468.9,625.2 469.2,627.8 469.6,630.4 469.9,633.0 470.2,635.5 470.5,638.1 470.9,640.6 471.2,643.1 471.5,645.6 471.8,648.1 472.1,650.6 472.4,653.1 472.7,655.6 473.0,658.1 473.3,660.5 473.6,663.0 473.8,665.5 474.1,667.9 474.3,670.4 474.6,672.8 474.8,675.2 475.0,677.7 475.2,680.1 475.4,682.5 475.7,685.0 475.9,687.4 476.0,689.8 476.2,692.2 476.4,694.6 476.6,697.0 476.8,699.4 476.9,701.8 477.1,704.1 477.3,706.5 477.5,708.8 477.6,711.2 477.8,713.5 478.0,715.8 478.2,718.1 478.5,720.4 478.7,722.6 478.9,724.8 479.2,727.1 479.4,729.3 479.7,731.4 479.9,733.6 480.2,735.8 480.5,737.9 480.8,740.1 481.0,742.2 481.3,744.3 481.6,746.5 481.9,748.6 482.1,750.7 482.4,752.8 482.7,754.9" fill="none" stroke="#000080" stroke-width="1" stroke-linejoin="round" />
<polyline points="614.7,27.9 613.5,32.8 612.3,37.7 611.2,42.6 610.1,47.5 609.0,52.4 607.9,57.2 606.8,62.1 605.8,66.9 604.8,71.7 603.8,76.5 602.9,81.3 601.9,86.1 601.1,90.8 600.2,95.6 599.4,100.3 598.6,104.9 597.8,109.6 597.0,114.3 596.3,118.9 595.6,123.5 594.9,128.1 594.3,132.7 593.7,137.3 593.1,141.8 592.5,146.3 591.9,150.8 591.4,155.3 590.9,159.8 590.4,164.2 590.0,168.7 589.5,173.1 589.1,177.5 588.7,181.9 588.4,186.2 588.0,190.6 587.7,194.9 587.4,199.2 587.1,203.5 586.8,207.8 586.6,212.1 586.3,216.3 586.1,220.5 585.9,224.7 585.7,228.9 585.5,233.1 585.4,237.3 585.2,241.4 585.1,245.5 584.9,249.6 584.8,253.7 584.7,257.8 584.6,261.9 584.5,265.9 584.4,269.9 584.3,273.9 584.2,277.9 584.1,281.9 584.1,285.9 584.0,289.8 583.9,293.7 583.9,297.6 583.8,301.5 583.7,305.4 583.7,309.3 583.6,313.1 583.5,316.9 583.4,320.7 583.4,324.5 583.3,328.3 583.2,332.1 583.1,335.8 583.0,339.6 582.9,343.3 582.8,347.0 582.7,350.6 582.6,354.3 582.5,358.0 582.4,361.6 582.3,365.2 582.1,368.8 582.0,372.4 581.8,376.0 581.7,379.5 581.5,383.1 581.3,386.6 581.1,390.1 581.0,393.6 580.8,397.1 580.6,400.5 580.4,404.0 580.1,407.4 579.9,410.8 579.7,414.2 579.5,417.6 579.2,421.0 579.0,424.3 578.7,427.7 578.5,431.0 578.2,434.3 577.9,437.6 577.7,440.9 577.4,444.1 577.1,447.4 576.8,450.6 576.5,453.8 576.3,457.0 576.0,460.2 575.7,463.4 575.3,466.5 575.0,469.7 574.7,472.8 574.4,475.9 574.1,479.0 573.7,482.1 573.4,485.2 573.1,488.3 572.7,491.3 572.4,494.4 572.0,497.4 571.7,500.4 571.3,503.5 570.9,506.5 570.6,509.5 570.2,512.5 569.8,515.4 569.4,518.4 569.0,521.4 568.6,524.3 568.2,527.3 567.8,530.2 567.4,533.2 567.0,536.1 566.6,539.0 566.2,541.9 565.7,544.8 565.3,547.7 564.9,550.6 564.4,553.5 564.0,556.4 563.5,559.3 563.1,562.1 562.7,565.0 562.2,567.8 561.8,570.6 561.3,573.5 560.9,576.3 560.4,579.1 560.0,581.9 559.5,584.7 559.1,587.5 558.6,590.2 558.2,593.0 557.8,595.7 557.3,598.5 556.9,601.2 556.5,603.9 556.1,606.6 555.6,609.3 555.2,612.0 554.8,614.7 554.4,617.3 554.0,619.9 553.7,622.6 553.3,625.2 552.9,627.8 552.5,630.4 552.2,633.0 551.8,635.5 551.5,638.1 551.2,640.6 550.8,643.1 550.5,645.6 550.2,648.1 549.9,650.6 549.6,653.1 549.3,655.6 549.0,658.1 548.7,660.5 548.4,663.0 548.1,665.5 547.8,667.9 547.5,670.4 547.2,672.8 546.9,675.2 546.6,677.7 546.3,680.1 546.0,682.5 545.7,685.0 545.4,687.4 545.1,689.8 544.8,692.2 544.5,694.6 544.3,697.0 544.0,699.4 543.7,701.8 543.4,704.1 543.2,706.5 542.9,708.8 542.7,711.2 542.4,713.5 542.2,715.8 542.0,718.1 541.8,720.4 541.7,722.6 541.5,724.8 541.4,727.1 541.3,729.3 541.1,731.4 541.0,733.6 541.0,735.8 540.9,737.9 540.8,740.1 540.7,742.2 540.6,744.3 540.6,746.5 540.5,748.6 540.5,750.7 540.4,752.8 540.4,754.9" fill="none" stroke="#000080" stroke-width="1" stroke-linejoin="round" />
<polyline points="863.3,27.9 861.6,32.8 860.0,37.7 858.3,42.6 856.6,47.5 855.0,52.4 853.3,57.2 851.5,62.1 849.8,66.9 848.1,71.7 846.3,76.5 844.6,81.3 842.8,86.1 841.1,90.8 839.3,95.6 837.6,100.3 835.8,104.9 834.0,109.6 832.3,114.3 830.5,118.9 828.7,123.5 826.9,128.1 825.1,132.7 823.4,137.3 821.6,141.8 819.8,146.3 818.0,150.8 816.2,155.3 814.4,159.8 812.6,164.2 810.8,168.7 809.0,173.1 807.2,177.5 805.4,181.9 803.6,186.2 801.8,190.6 800.0,194.9 798.2,199.2 796.4,203.5 794.6,207.8 792.8,212.1 791.0,216.3 789.2,220.5 787.4,224.7 785.7,228.9 783.9,233.1 782.1,237.3 780.3,241.4 778.6,245.5 776.8,249.6 775.0,253.7 773.3,257.8 771.5,261.9 769.8,265.9 768.0,269.9 766.3,273.9 764.6,277.9 762.9,281.9 761.1,285.9 759.4,289.8 757.7,293.7 756.0,297.6 754.3,301.5 752.7,305.4 751.0,309.3 749.3,313.1 747.6,316.9 746.0,320.7 744.3,324.5 742.7,328.3 741.1,332.1 739.4,335.8 737.8,339.6 736.2,343.3 734.6,347.0 733.0,350.6 731.4,354.3 729.9,358.0 728.3,361.6 726.8,365.2 725.2,368.8 723.7,372.4 722.1,376.0 720.6,379.5 719.1,383.1 717.6,386.6 716.1,390.1 714.7,393.6 713.2,397.1 711.7,400.5 710.3,404.0 708.8,407.4 707.4,410.8 706.0,414.2 704.6,417.6 703.2,421.0 701.8,424.3 700.4,427.7 699.1,431.0 697.7,434.3 696.4,437.6 695.1,440.9 693.7,444.1 692.4,447.4 691.1,450.6 689.9,453.8 688.6,457.0 687.3,460.2 686.1,463.4 684.8,466.5 683.6,469.7 682.4,472.8 681.2,475.9 680.0,479.0 678.8,482.1 677.6,485.2 676.4,488.3 675.3,491.3 674.1,494.4 672.9,497.4 671.8,500.4 670.7,503.5 669.5,506.5 668.4,509.5 667.3,512.5 666.2,515.4 665.1,518.4 664.0,521.4 662.9,524.3 661.8,527.3 660.7,530.2 659.7,533.2 658.6,536.1 657.5,539.0 656.5,541.9 655.4,544.8 654.4,547.7 653.3,550.6 652.3,553.5 651.3,556.4 650.2,559.3 649.2,562.1 648.2,565.0 647.2,567.8 646.2,570.6 645.2,573.5 644.2,576.3 643.3,579.1 642.3,581.9 641.3,584.7 640.4,587.5 639.4,590.2 638.5,593.0 637.6,595.7 636.7,598.5 635.8,601.2 634.9,603.9 634.0,606.6 633.2,609.3 632.3,612.0 631.5,614.7 630.6,617.3 629.8,619.9 629.0,622.6 628.2,625.2 627.4,627.8 626.7,630.4 625.9,633.0 625.2,635.5 624.5,638.1 623.7,640.6 623.0,643.1 622.3,645.6 621.7,648.1 621.0,650.6 620.3,653.1 619.6,655.6 619.0,658.1 618.3,660.5 617.7,663.0 617.1,665.5 616.4,667.9 615.8,670.4 615.2,672.8 614.6,675.2 613.9,677.7 613.3,680.1 612.7,682.5 612.1,685.0 611.5,687.4 610.9,689.8 610.4,692.2 609.8,694.6 609.2,697.0 608.6,699.4 608.1,701.8 607.5,704.1 607.0,706.5 606.5,708.8 605.9,711.2 605.4,713.5 605.0,715.8 604.5,718.1 604.1,720.4 603.6,722.6 603.2,724.8 602.8,727.1 602.5,729.3 602.1,731.4 601.8,733.6 601.4,735.8 601.1,737.9 600.8,740.1 600.5,742.2 600.2,744.3 599.9,746.5 599.6,748.6 599.3,750.7 599.1,752.8 598.8,754.9" fill="none" stroke="#000080" stroke-width="1" stroke-linejoin="round" />
<polyline points="1037.5,27.9 1034.1,32.8 1030.8,37.7 1027.5,42.6 1024.2,47.5 1021.0,52.4 1017.7,57.2 1014.4,62.1 1011.2,66.9 1007.9,71.7 1004.7,76.5 1001.5,81.3 998.3,86.1 995.1,90.8 992.0,95.6 988.9,100.3 985.7,104.9 982.6,109.6 979.6,114.3 976.5,118.9 973.4,123.5 970.4,128.1 967.4,132.7 964.4,137.3 961.4,141.8 958.4,146.3 955.5,150.8 952.5,155.3 949.6,159.8 946.7,164.2 943.8,168.7 941.0,173.1 938.1,177.5 935.3,181.9 932.5,186.2 929.7,190.6 926.9,194.9 924.1,199.2 921.4,203.5 918.7,207.8 915.9,212.1 913.2,216.3 910.6,220.5 907.9,224.7 905.2,228.9 902.6,233.1 900.0,237.3 897.4,241.4 894.8,245.5 892.2,249.6 889.7,253.7 887.2,257.8 884.6,261.9 882.1,265.9 879.7,269.9 877.2,273.9 874.7,277.9 872.3,281.9 869.9,285.9 867.5,289.8 865.1,293.7 862.7,297.6 860.4,301.5 858.0,305.4 855.7,309.3 853.4,313.1 851.1,316.9 848.8,320.7 846.6,324.5 844.3,328.3 842.1,332.1 839.9,335.8 837.7,339.6 835.5,343.3 833.4,347.0 831.2,350.6 829.1,354.3 827.0,358.0 824.9,361.6 822.8,365.2 820.8,368.8 818.7,372.4 816.7,376.0 814.7,379.5 812.7,383.1 810.7,386.6 808.7,390.1 806.8,393.6 804.8,397.1 802.9,400.5 801.0,404.0 799.1,407.4 797.3,410.8 795.4,414.2 793.6,417.6 791.8,421.0 789.9,424.3 788.2,427.7 786.4,431.0 784.6,434.3 782.9,437.6 781.2,440.9 779.4,444.1 777.8,447.4 776.1,450.6 774.4,453.8 772.8,457.0 771.1,460.2 769.5,463.4 767.9,466.5 766.3,469.7 764.8,472.8 763.2,475.9 761.7,479.0 760.1,482.1 758.6,485.2 757.1,488.3 755.6,491.3 754.1,494.4 752.7,497.4 751.2,500.4 749.8,503.5 748.4,506.5 746.9,509.5 745.5,512.5 744.1,515.4 742.7,518.4 741.3,521.4 740.0,524.3 738.6,527.3 737.2,530.2 735.9,533.2 734.5,536.1 733.2,539.0 731.9,541.9 730.5,544.8 729.2,547.7 727.9,550.6 726.6,553.5 725.3,556.4 724.0,559.3 722.8,562.1 721.5,565.0 720.2,567.8 719.0,570.6 717.7,573.5 716.5,576.3 715.3,579.1 714.1,581.9 712.9,584.7 711.7,587.5 710.5,590.2 709.3,593.0 708.2,595.7 707.0,598.5 705.9,601.2 704.8,603.9 703.7,606.6 702.6,609.3 701.5,612.0 700.4,614.7 699.3,617.3 698.3,619.9 697.3,622.6 696.3,625.2 695.3,627.8 694.3,630.4 693.3,633.0 692.4,635.5 691.4,638.1 690.5,640.6 689.6,643.1 688.7,645.6 687.8,648.1 686.9,650.6 686.1,653.1 685.2,655.6 684.4,658.1 683.6,660.5 682.8,663.0 681.9,665.5 681.1,667.9 680.3,670.4 679.6,672.8 678.8,675.2 678.0,677.7 677.2,680.1 676.5,682.5 675.7,685.0 675.0,687.4 674.2,689.8 673.5,692.2 672.7,694.6 672.0,697.0 671.3,699.4 670.6,701.8 669.9,704.1 669.2,706.5 668.5,708.8 667.8,711.2 667.2,713.5 666.5,715.8 665.9,718.1 665.3,720.4 664.8,722.6 664.2,724.8 663.7,727.1 663.2,729.3 662.7,731.4 662.2,733.6 661.7,735.8 661.3,737.9 660.8,740.1 660.4,742.2 659.9,744.3 659.5,746.5 659.1,748.6 658.7,750.7 658.3,752.8 657.9,754.9" fill="none" stroke="#000080" stroke-width="1" stroke-linejoin="round" />
<line x1="121.5" y1="50" x2="121.5" y2="749" stroke="#005000" stroke-width="1"/>
<line x1="181.5" y1="50" x2="181.5" y2="749" stroke="#005000" stroke-width="1"/>
<line x1="241.5" y1="50" x2="241.5" y2="749" stroke="#005000" stroke-width="1"/>
<line x1="301.5" y1="50" x2="301.5" y2="749" stroke="#005000" stroke-width="1"/>
<line x1="361.5" y1="50" x2="361.5" y2="749" stroke="#005000" stroke-width="1"/>
<line x1="421.5" y1="50" x2="421.5" y2="749" stroke="#005000" stroke-width="1"/>
<line x1="481.5" y1="50" x2="481.5" y2="749" stroke="#005000" stroke-width="1"/>
<line x1="541.5" y1="50" x2="541.5" y2="749" stroke="#005000" stroke-width="1"/>
<line x1="601.5" y1="50" x2="601.5" y2="749" stroke="#005000" stroke-width="1"/>
<line x1="-658.5" y1="800.5" x2="141.5" y2="0.5" stroke="#ffffff" stroke-width="1"/>
<line x1="-598.5" y1="800.5" x2="201.5" y2="0.5" stroke="#ffffff" stroke-width="1"/>
<line x1="-538.5" y1="800.5" x2="261.5" y2="0.5" stroke="#ffffff" stroke-width="1"/>
<line x1="-478.5" y1="800.5" x2="321.5" y2="0.5" stroke="#ffffff" stroke-width="1"/>
<line x1="-418.5" y1="800.5" x2="381.5" y2="0.5" stroke="#ffffff" stroke-width="1"/>
<line x1="-358.5" y1="800.5" x2="441.5" y2="0.5" stroke="#ffffff" stroke-width="1"/>
<line x1="-298.5" y1="800.5" x2="501.5" y2="0.5" stroke="#ffffff" stroke-width="1"/>
<line x1="-238.5" y1="800.5" x2="561.5" y2="0.5" stroke="#ffffff" stroke-width="1"/>
<line x1="-178.5" y1="800.5" x2="621.5" y2="0.5" stroke="#ffffff" stroke-width="1"/>
<line x1="-118.5" y1="800.5" x2="681.5" y2="0.5" stroke="#ffffff" stroke-width="1"/>
<line x1="-58.5" y1="800.5" x2="741.5" y2="0.5" stroke="#ffffff" stroke-width="1"/>
<line x1="1.5" y1="800.5" x2="801.5" y2="0.5" stroke="#ffffff" stroke-width="1"/>
<line x1="61.5" y1="800.5" x2="861.5" y2="0.5" stroke="#ffffff" stroke-width="1"/>
<line x1="121.5" y1="800.5" x2="921.5" y2="0.5" stroke="#ffffff" stroke-width="1"/>
<line x1="181.5" y1="800.5" x2="981.5" y2="0.5" stroke="#ffffff" stroke-width="1"/>
<line x1="241.5" y1="800.5" x2="1041.5" y2="0.5" stroke="#ffffff" stroke-width="1"/>
<line x1="301.5" y1="800.5" x2="1101.5" y2="0.5" stroke="#ffffff" stroke-width="1"/>
<line x1="361.5" y1="800.5" x2="1161.5" y2="0.5" stroke="#ffffff" stroke-width="1"/>
<line x1="421.5" y1="800.5" x2="1221.5" y2="0.5" stroke="#ffffff" stroke-width="1"/>
<line x1="481.5" y1="800.5" x2="1281.5" y2="0.5" stroke="#ffffff" stroke-width="1"/>
<line x1="541.5" y1="800.5" x2="1341.5" y2="0.5" stroke="#ffffff" stroke-width="1"/>
<line x1="601.5" y1="800.5" x2="1401.5" y2="0.5" stroke="#ffffff" stroke-width="1"/>
<line x1="661.5" y1="800.5" x2="1461.5" y2="0.5" stroke="#ffffff" stroke-width="1"/>
</g>
<line x1="56" y1="50.5" x2="667" y2="50.5" stroke="#fff" stroke-width="1"/>
<line x1="56" y1="321.5" x2="667" y2="321.5" stroke="#fff" stroke-width="1"/>
<line x1="56" y1="449.5" x2="667" y2="449.5" stroke="#fff" stroke-width="1"/>
<line x1="56" y1="529.5" x2="667" y2="529.5" stroke="#fff" stroke-width="1"/>
<line x1="56" y1="586.5" x2="667" y2="586.5" stroke="#fff" stroke-width="1"/>
<line x1="56" y1="630.5" x2="667" y2="630.5" stroke="#fff" stroke-width="1"/>
<line x1="56" y1="665.5" x2="667" y2="665.5" stroke="#fff" stroke-width="1"/>
<line x1="56" y1="694.5" x2="667" y2="694.5" stroke="#fff" stroke-width="1"/>
<line x1="56" y1="719.5" x2="667" y2="719.5" stroke="#fff" stroke-width="1"/>
<line x1="56" y1="740.5" x2="667" y2="740.5" stroke="#fff" stroke-width="1"/>
<line x1="61.5" y1="50" x2="61.5" y2="750" stroke="#fff" stroke-width="1"/>
<line x1="661.5" y1="50" x2="661.5" y2="750" stroke="#fff" stroke-width="1"/>
<line x1="61" y1="749.5" x2="662" y2="749.5" stroke="#fff" stroke-width="1"/>
<g clip-path="url(#pc)">
<polygon points="411.7,438.0 412.0,440.1 412.3,442.2 412.6,444.3 412.9,446.4 413.3,448.5 413.6,450.6 414.0,452.7 414.4,454.8 414.8,456.9 415.2,459.0 415.6,461.1 416.0,463.2 416.4,465.3 416.8,467.4 417.2,469.5 417.6,471.6 418.1,473.7 418.5,475.8 418.9,477.9 419.3,480.0 419.7,482.1 420.1,484.2 420.6,486.3 421.0,488.4 421.4,490.5 421.8,492.6 422.2,494.7 422.6,496.8 423.0,498.9 423.3,501.0 423.7,503.1 424.1,505.2 424.5,507.3 424.9,509.4 425.3,511.5 425.7,513.6 426.1,515.7 426.6,517.8 427.1,519.9 427.5,522.0 428.0,524.1 428.4,526.2 428.9,528.3 429.3,530.4 429.8,532.5 430.2,534.6 430.7,536.7 431.2,538.8 431.6,540.9 432.1,543.0 432.5,545.1 432.9,547.2 433.4,549.3 433.8,551.4 434.2,553.5 434.6,555.6 435.0,557.7 435.4,559.8 435.8,561.9 436.2,564.1 436.7,566.2 437.1,568.3 437.5,570.4 437.9,572.5 438.3,574.6 438.5,576.7 438.6,578.8 438.8,580.9 438.9,583.0 439.1,585.1 439.2,587.2 439.3,589.3 439.3,591.4 439.4,593.5 439.4,595.6 439.5,597.7 439.5,599.8 439.5,601.9 439.5,604.0 439.5,606.1 439.5,608.2 439.5,610.3 440.1,612.4 440.7,614.5 441.2,616.6 441.8,618.7 442.3,620.8 442.4,622.9 442.4,625.0 442.5,627.1 442.6,629.2 442.7,631.3 443.1,633.4 443.4,635.5 443.7,637.6 444.0,639.7 445.4,641.8 447.8,643.9 450.2,646.0 452.6,648.1 452.6,650.2 452.6,652.3 452.6,654.4 452.6,656.5 453.1,658.6 454.2,660.7 455.2,662.8 456.3,664.9 457.7,667.0 458.9,669.1 459.9,671.2 460.9,673.3 461.9,675.4 462.9,677.5 463.9,679.6 464.9,681.7 466.6,683.8 468.7,685.9 470.8,688.0 468.2,688.0 468.0,685.9 467.7,683.8 467.4,681.7 467.1,679.6 466.9,677.5 466.6,675.4 466.3,673.3 466.0,671.2 465.8,669.1 465.5,667.0 465.2,664.9 465.0,662.8 464.7,660.7 464.4,658.6 464.1,656.5 463.9,654.4 463.5,652.3 463.2,650.2 462.9,648.1 462.5,646.0 462.2,643.9 461.8,641.8 461.5,639.7 461.1,637.6 460.8,635.5 460.4,633.4 460.1,631.3 459.7,629.2 459.3,627.1 459.0,625.0 458.6,622.9 458.2,620.8 457.8,618.7 457.4,616.6 457.1,614.5 456.7,612.4 456.3,610.3 455.9,608.2 455.5,606.1 455.1,604.0 454.8,601.9 454.4,599.8 454.0,597.7 453.6,595.6 453.2,593.5 452.8,591.4 452.4,589.3 451.9,587.2 451.4,585.1 450.9,583.0 450.3,580.9 449.8,578.8 449.3,576.7 448.8,574.6 448.3,572.5 447.7,570.4 447.2,568.3 446.7,566.2 446.2,564.1 445.7,561.9 445.1,559.8 444.6,557.7 444.1,555.6 443.6,553.5 443.1,551.4 442.6,549.3 442.0,547.2 441.5,545.1 441.0,543.0 440.5,540.9 440.0,538.8 439.4,536.7 438.9,534.6 438.4,532.5 437.9,530.4 437.3,528.3 436.7,526.2 436.1,524.1 435.5,522.0 434.9,519.9 434.3,517.8 433.7,515.7 433.1,513.6 432.5,511.5 431.9,509.4 431.3,507.3 430.8,505.2 430.2,503.1 429.6,501.0 429.0,498.9 428.4,496.8 427.8,494.7 427.2,492.6 426.6,490.5 426.0,488.4 425.4,486.3 424.8,484.2 424.2,482.1 423.6,480.0 423.0,477.9 422.4,475.8 421.8,473.7 421.4,471.6 420.9,469.5 420.4,467.4 419.9,465.3 419.5,463.2 419.0,461.1 418.5,459.0 418.0,456.9 417.6,454.8 417.1,452.7 416.6,450.6 416.1,448.5 415.6,446.4 415.2,444.3 414.7,442.2 414.2,440.1 413.7,438.0" fill="#008000"/>
<polygon points="468.5,688.0 477.3,694.9 484.7,705.5 486.3,712.4 486.6,719.6 487.8,725.8 471.8,714.4 470.2,709.7" fill="#800000"/>
<path d="M624,146.5h5M626.5,144v5M532,218.5h5M534.5,216v5M449,274.5h5M451.5,272v5M403,360.5h5M405.5,358v5M403,394.5h5M405.5,392v5M407,423.5h5M409.5,421v5M415,472.5h5M417.5,470v5M419,493.5h5M421.5,491v5M423,512.5h5M425.5,510v5M430,544.5h5M432.5,542v5M433,560.5h5M435.5,558v5M436,574.5h5M438.5,572v5M437,598.5h5M439.5,596v5M437,610.5h5M439.5,608v5M440,620.5h5M442.5,618v5M442,640.5h5M444.5,638v5M450,648.5h5M452.5,646v5M450,657.5h5M452.5,655v5M456,668.5h5M458.5,666v5M463,682.5h5M465.5,680v5M475,694.5h5M477.5,692v5M482,705.5h5M484.5,703v5M484,712.5h5M486.5,710v5M486,726.5h5M488.5,724v5M494,730.5h5M496.5,728v5M496,736.5h5M498.5,734v5" stroke="#fff" stroke-width="1" fill="none"/>
<path d="M470,146.5h5M472.5,144v5M404,218.5h5M406.5,216v5M436,274.5h5M438.5,272v5M404,360.5h5M406.5,358v5M403,394.5h5M405.5,392v5M406,423.5h5M408.5,421v5M407,472.5h5M409.5,470v5M407,493.5h5M409.5,491v5M403,512.5h5M405.5,510v5M405,544.5h5M407.5,542v5M400,560.5h5M402.5,558v5M394,574.5h5M396.5,572v5M394,598.5h5M396.5,596v5M401,610.5h5M403.5,608v5M412,620.5h5M414.5,618v5M412,640.5h5M414.5,638v5M422,648.5h5M424.5,646v5M425,657.5h5M427.5,655v5M442,668.5h5M444.5,666v5M443,682.5h5M445.5,680v5M446,694.5h5M448.5,692v5M449,705.5h5M451.5,703v5M452,712.5h5M454.5,710v5M457,726.5h5M459.5,724v5M461,730.5h5M463.5,728v5M460,736.5h5M462.5,734v5" stroke="#fff" stroke-width="1" fill="none"/>
<path d="M155,146.5h5M157.5,144v5M227,218.5h5M229.5,216v5M322,274.5h5M324.5,272v5M335,360.5h5M337.5,358v5M317,394.5h5M319.5,392v5M305,423.5h5M307.5,421v5M281,472.5h5M283.5,470v5M269,493.5h5M271.5,491v5M269,512.5h5M271.5,510v5M275,544.5h5M277.5,542v5M275,560.5h5M277.5,558v5M275,574.5h5M277.5,572v5M263,586.5h5M265.5,584v5M257,598.5h5M259.5,596v5M245,610.5h5M247.5,608v5M233,620.5h5M235.5,618v5M221,630.5h5M223.5,628v5M209,640.5h5M211.5,638v5M209,648.5h5M211.5,646v5M209,657.5h5M211.5,655v5M196,665.5h5M198.5,663v5M191,668.5h5M193.5,666v5M161,682.5h5M163.5,680v5M131,694.5h5M133.5,692v5M89,705.5h5M91.5,703v5M83,712.5h5M85.5,710v5M77,719.5h5M79.5,717v5M77,726.5h5M79.5,724v5M77,730.5h5M79.5,728v5M77,736.5h5M79.5,734v5" stroke="#fff" stroke-width="1" fill="none"/>
<path d="M94,146.5h5M96.5,144v5M124,218.5h5M126.5,216v5M217,274.5h5M219.5,272v5M231,360.5h5M233.5,358v5M213,394.5h5M215.5,392v5M200,423.5h5M202.5,421v5M177,472.5h5M179.5,470v5M168,493.5h5M170.5,491v5M174,512.5h5M176.5,510v5M186,544.5h5M188.5,542v5M184,560.5h5M186.5,558v5M180,574.5h5M182.5,572v5M167,586.5h5M169.5,584v5M160,598.5h5M162.5,596v5M151,610.5h5M153.5,608v5M140,620.5h5M142.5,618v5M132,630.5h5M134.5,628v5M124,640.5h5M126.5,638v5M124,648.5h5M126.5,646v5M126,657.5h5M128.5,655v5M118,665.5h5M120.5,663v5M116,668.5h5M118.5,666v5M96,682.5h5M98.5,680v5M106,694.5h5M108.5,692v5M166,705.5h5M168.5,703v5M171,712.5h5M173.5,710v5M173,719.5h5M175.5,717v5M178,726.5h5M180.5,724v5M182,730.5h5M184.5,728v5M183,736.5h5M185.5,734v5" stroke="#fff" stroke-width="1" fill="none"/>
<polyline points="127.3,50.0 157.2,146.3 229.5,218.5 325.0,274.4 354.0,321.2 337.3,360.4 319.3,394.2 307.4,423.1 295.2,449.4 283.3,472.4 271.7,493.1 271.7,512.3 271.7,528.9 277.2,545.0 277.2,560.2 277.2,574.6 265.7,586.4 259.3,598.6 247.4,610.4 235.1,620.3 223.3,630.4 211.7,640.7 211.7,648.1 211.7,657.5 199.0,665.3 193.4,668.0 163.4,682.5 133.8,694.6 91.2,705.4 85.5,712.3 79.8,719.5 79.8,726.4 79.8,731.0 79.8,736.4" fill="none" stroke="#00ff00" stroke-width="1" stroke-linejoin="round" />
<polyline points="109.3,50.0 96.2,146.3 126.1,218.5 219.2,274.4 251.2,321.2 233.5,360.4 215.2,394.2 202.4,423.1 190.2,449.4 179.2,472.4 170.3,493.1 176.1,512.3 181.0,528.9 188.4,545.0 186.2,560.2 182.6,574.6 169.6,586.4 162.7,598.6 153.6,610.4 142.2,620.3 134.6,630.4 126.1,640.7 127.0,648.1 128.6,657.5 120.5,665.3 118.7,668.0 98.9,682.5 108.7,694.6 168.6,705.4 173.2,712.3 175.2,719.5 180.5,726.4 184.4,731.0 185.1,736.4" fill="none" stroke="#ff0080" stroke-width="1" stroke-linejoin="round" />
<polyline points="567.7,50.0 472.5,146.3 406.9,218.5 438.0,274.4 413.5,321.2 406.0,360.4 405.5,394.2 409.0,423.1 409.7,449.4 409.4,472.4 409.6,493.1 405.6,512.3 407.1,528.9 407.1,545.0 402.6,560.2 396.5,574.6 394.8,586.4 396.5,598.6 403.4,610.4 414.2,620.3 415.2,630.4 414.2,640.7 424.2,648.1 427.4,657.5 432.6,665.3 444.2,668.0 445.3,682.5 448.9,694.6 451.5,705.4 454.6,712.3 457.0,719.5 459.8,726.4 463.6,731.0 462.4,736.4" fill="none" stroke="#00ffff" stroke-width="1" stroke-linejoin="round" />
<polyline points="724.9,50.0 626.6,146.3 534.1,218.5 451.1,274.4 416.0,321.2 405.9,360.4 405.5,394.2 409.4,423.1 413.4,449.4 417.8,472.4 421.9,493.1 425.4,512.3 429.0,528.9 432.5,545.0 435.5,560.2 438.3,574.6 439.2,586.4 439.5,598.6 439.5,610.4 442.3,620.3 442.6,630.4 444.2,640.7 452.6,648.1 452.6,657.5 456.5,665.3 458.4,668.0 465.3,682.5 477.3,694.6 484.7,705.4 486.3,712.3 486.6,719.5 488.2,726.4 496.7,731.0 498.4,736.4" fill="none" stroke="#ff0000" stroke-width="1" stroke-linejoin="round" />
<polyline points="471.8,714.4 470.2,709.7 468.5,690.0 463.7,653.2 459.5,627.9 452.6,590.0 437.7,529.7 422.0,474.4 413.4,436.5 407.7,413.7 404.0,394.8 400.2,375.8 396.4,337.9 394.8,300.0 399.8,223.0 413.0,148.0 439.5,50.0" fill="none" stroke="#ff00ff" stroke-width="1" stroke-linejoin="round" />
<polyline points="479.8,699.9 479.1,693.7 477.4,674.2 472.1,630.0 467.4,590.0 463.6,575.5 454.4,526.7 443.8,481.0 436.2,447.9 429.5,413.7 422.9,379.6 419.1,347.4 416.8,310.0 416.0,268.9 420.6,217.0 425.0,177.0 436.5,131.5 457.8,50.0" fill="none" stroke="#ffb4ff" stroke-width="1" stroke-linejoin="round" />
<polyline points="459.8,736.5 471.8,714.4 501.9,735.7" fill="none" stroke="#ff00ff" stroke-width="1" stroke-linejoin="round" />
<polyline points="471.3,715.2 479.8,699.9 531.6,736.3" fill="none" stroke="#ffb4ff" stroke-width="1" stroke-linejoin="round" />
<path d="M58,648.5h5M60.5,646v5M58,657.5h5M60.5,655v5M58,682.5h5M60.5,680v5" stroke="#fff" fill="none"/>
<path d="M67,694.5h5M69.5,692v5M89,712.5h5M91.5,710v5M104,725.5h5M106.5,723v5M167,730.5h5M169.5,728v5M155,736.5h5M157.5,734v5M144,728.5h5M146.5,726v5" stroke="#fff" fill="none"/>
<path d="M80,668.5h5M82.5,666v5M85,682.5h5M87.5,680v5M82,705.5h5M84.5,703v5M113,712.5h5M115.5,710v5M151,719.5h5M153.5,717v5M173,726.5h5M175.5,724v5M151,728.5h5M153.5,726v5M144,730.5h5M146.5,728v5M168,736.5h5M170.5,734v5" stroke="#fff" fill="none"/>
<path d="M208,736.5h5M210.5,734v5M212,730.5h5M214.5,728v5M216,726.5h5M218.5,724v5M221,718.5h5M223.5,716v5M238,704.5h5M240.5,702v5M252,694.5h5M254.5,692v5M264,682.5h5M266.5,680v5M277,668.5h5M279.5,666v5M280,666.5h5M282.5,664v5" stroke="#fff" fill="none"/>
<polyline points="61.0,665.4 75.5,666.8 82.5,668.3 87.4,682.5 81.7,694.6 85.0,705.2 95.0,707.6 115.3,712.3 123.2,713.5 142.9,717.8 153.5,719.4 175.2,726.4 162.7,727.7 153.5,729.0 146.9,730.6 149.5,732.3 170.6,736.2" fill="none" stroke="#e87400" stroke-width="1" stroke-linejoin="round" />
<polyline points="62.3,676.0 62.3,682.5 69.4,695.0 85.5,706.0 91.2,712.0 95.9,720.0 106.8,725.8 114.9,727.5 131.7,728.3 146.2,728.7 157.4,730.0 169.3,731.0 168.0,732.3 157.4,736.2" fill="none" stroke="#ffff00" stroke-width="1" stroke-linejoin="round" />
<polyline points="211.0,736.5 215.0,731.0 218.0,726.5 223.5,719.0 230.5,713.2 240.5,705.0 254.0,695.0 261.2,688.2 266.5,682.2 279.5,668.5 282.5,666.0 287.5,659.5" fill="none" stroke="#c8c800" stroke-width="1" stroke-linejoin="round" />
</g>
<rect x="61" y="713.8" width="565" height="1.5" fill="#ff00ff" shape-rendering="auto"/>
<rect x="227.0" y="709.7" width="8" height="8" fill="#c8c800"/>
<text x="231.0" y="717.0" fill="#000" font-size="8" text-anchor="middle" >1</text>
<rect x="257.7" y="684.7" width="8" height="8" fill="#c8c800"/>
<text x="261.7" y="692.0" fill="#000" font-size="8" text-anchor="middle" >2</text>
<rect x="284.0" y="656.0" width="8" height="8" fill="#c8c800"/>
<text x="288.0" y="663.3" fill="#000" font-size="8" text-anchor="middle" >3</text>
<rect x="625.5" y="705.5" width="30" height="17" fill="#000" stroke="#ff00ff" stroke-width="1.2"/>
<text x="640.8" y="719" fill="#ff00ff" font-size="13" text-anchor="middle" textLength="22.6" lengthAdjust="spacingAndGlyphs" transform="matrix(1,0,0,1.08,0,-57.520)" >LCL</text>
<rect x="67.5" y="607.5" width="43" height="17" fill="#000" stroke="#ffff00" stroke-width="1.2"/>
<text x="89" y="621" fill="#ffff00" font-size="13" text-anchor="middle" textLength="33" lengthAdjust="spacingAndGlyphs" transform="matrix(1,0,0,1.08,0,-49.680)" >CAPE</text>
<rect x="67.5" y="636.5" width="57" height="17" fill="#000" stroke="#e87400" stroke-width="1.2"/>
<text x="96" y="650" fill="#e87400" font-size="13" text-anchor="middle" textLength="48" lengthAdjust="spacingAndGlyphs" transform="matrix(1,0,0,1.08,0,-52.000)" >CINH * 5</text>
<text x="61.5" y="29" fill="#fff" font-size="16" font-weight="bold" textLength="108.3" lengthAdjust="spacingAndGlyphs" >Station: Basel</text>
<text x="196.4" y="29" fill="#fff" font-size="16" font-weight="bold" textLength="127.4" lengthAdjust="spacingAndGlyphs" >Date: 09.06.2010</text>
<text x="345.8" y="29" fill="#fff" font-size="16" font-weight="bold" textLength="92.2" lengthAdjust="spacingAndGlyphs" >Time: 0740Z</text>
<text x="52.8" y="55" fill="#fff" font-size="13" text-anchor="end" textLength="21.45" lengthAdjust="spacingAndGlyphs" transform="matrix(1,0,0,1.08,0,-4.400)" >100</text>
<text x="52.8" y="326" fill="#fff" font-size="13" text-anchor="end" textLength="21.45" lengthAdjust="spacingAndGlyphs" transform="matrix(1,0,0,1.08,0,-26.080)" >200</text>
<text x="52.8" y="454" fill="#fff" font-size="13" text-anchor="end" textLength="21.45" lengthAdjust="spacingAndGlyphs" transform="matrix(1,0,0,1.08,0,-36.320)" >300</text>
<text x="52.8" y="534" fill="#fff" font-size="13" text-anchor="end" textLength="21.45" lengthAdjust="spacingAndGlyphs" transform="matrix(1,0,0,1.08,0,-42.720)" >400</text>
<text x="52.8" y="591" fill="#fff" font-size="13" text-anchor="end" textLength="21.45" lengthAdjust="spacingAndGlyphs" transform="matrix(1,0,0,1.08,0,-47.280)" >500</text>
<text x="52.8" y="635" fill="#fff" font-size="13" text-anchor="end" textLength="21.45" lengthAdjust="spacingAndGlyphs" transform="matrix(1,0,0,1.08,0,-50.800)" >600</text>
<text x="52.8" y="670" fill="#fff" font-size="13" text-anchor="end" textLength="21.45" lengthAdjust="spacingAndGlyphs" transform="matrix(1,0,0,1.08,0,-53.600)" >700</text>
<text x="52.8" y="699" fill="#fff" font-size="13" text-anchor="end" textLength="21.45" lengthAdjust="spacingAndGlyphs" transform="matrix(1,0,0,1.08,0,-55.920)" >800</text>
<text x="52.8" y="724" fill="#fff" font-size="13" text-anchor="end" textLength="21.45" lengthAdjust="spacingAndGlyphs" transform="matrix(1,0,0,1.08,0,-57.920)" >900</text>
<text x="52.8" y="745" fill="#fff" font-size="13" text-anchor="end" textLength="28.7" lengthAdjust="spacingAndGlyphs" transform="matrix(1,0,0,1.08,0,-59.600)" >1000</text>
<text x="670.5" y="50.2" fill="#fff" font-size="13" textLength="46.5" lengthAdjust="spacingAndGlyphs" transform="matrix(1,0,0,1.08,0,-4.016)" >16404m</text>
<text x="670.5" y="321.2" fill="#fff" font-size="13" textLength="46.5" lengthAdjust="spacingAndGlyphs" transform="matrix(1,0,0,1.08,0,-25.696)" >12034m</text>
<text x="670.5" y="449.2" fill="#fff" font-size="13" textLength="39.6" lengthAdjust="spacingAndGlyphs" transform="matrix(1,0,0,1.08,0,-35.936)" >9398m</text>
<text x="670.5" y="529.2" fill="#fff" font-size="13" textLength="39.6" lengthAdjust="spacingAndGlyphs" transform="matrix(1,0,0,1.08,0,-42.336)" >7365m</text>
<text x="670.5" y="586.2" fill="#fff" font-size="13" textLength="39.6" lengthAdjust="spacingAndGlyphs" transform="matrix(1,0,0,1.08,0,-46.896)" >5698m</text>
<text x="670.5" y="630.2" fill="#fff" font-size="13" textLength="39.6" lengthAdjust="spacingAndGlyphs" transform="matrix(1,0,0,1.08,0,-50.416)" >4285m</text>
<text x="670.5" y="665.2" fill="#fff" font-size="13" textLength="39.6" lengthAdjust="spacingAndGlyphs" transform="matrix(1,0,0,1.08,0,-53.216)" >3053m</text>
<text x="670.5" y="694.2" fill="#fff" font-size="13" textLength="39.6" lengthAdjust="spacingAndGlyphs" transform="matrix(1,0,0,1.08,0,-55.536)" >2030m</text>
<text x="670.5" y="719.2" fill="#fff" font-size="13" textLength="39.6" lengthAdjust="spacingAndGlyphs" transform="matrix(1,0,0,1.08,0,-57.536)" >1002m</text>
<path d="M61.5,750v4M61.5,788v4M61.5,826v4M121.5,750v4M121.5,788v4M121.5,826v4M181.5,750v4M181.5,788v4M181.5,826v4M241.5,750v4M241.5,788v4M241.5,826v4M301.5,750v4M301.5,788v4M301.5,826v4M361.5,750v4M361.5,788v4M361.5,826v4M421.5,750v4M421.5,788v4M421.5,826v4M481.5,750v4M481.5,788v4M481.5,826v4M541.5,750v4M541.5,788v4M541.5,826v4M601.5,750v4M601.5,788v4M601.5,826v4M661.5,750v4M661.5,788v4M661.5,826v4M61.5,863v4M136.5,863v4M211.5,863v4M286.5,863v4M361.5,863v4M436.5,863v4M511.5,863v4M586.5,863v4M661.5,863v4" stroke="#fff" fill="none"/>
<text x="61" y="768" fill="#fff" font-size="13" text-anchor="middle" transform="matrix(1,0,0,1.08,0,-61.440)" letter-spacing="-0.4">-50</text>
<text x="61" y="806" fill="#fff" font-size="13" text-anchor="middle" transform="matrix(1,0,0,1.08,0,-64.480)" letter-spacing="-0.4">0</text>
<text x="61" y="843" fill="#fff" font-size="13" text-anchor="middle" transform="matrix(1,0,0,1.08,0,-67.440)" letter-spacing="-0.4">0</text>
<text x="121" y="768" fill="#fff" font-size="13" text-anchor="middle" transform="matrix(1,0,0,1.08,0,-61.440)" letter-spacing="-0.4">-40</text>
<text x="121" y="806" fill="#fff" font-size="13" text-anchor="middle" transform="matrix(1,0,0,1.08,0,-64.480)" letter-spacing="-0.4">10</text>
<text x="121" y="843" fill="#fff" font-size="13" text-anchor="middle" transform="matrix(1,0,0,1.08,0,-67.440)" letter-spacing="-0.4">300</text>
<text x="181" y="768" fill="#fff" font-size="13" text-anchor="middle" transform="matrix(1,0,0,1.08,0,-61.440)" letter-spacing="-0.4">-30</text>
<text x="181" y="806" fill="#fff" font-size="13" text-anchor="middle" transform="matrix(1,0,0,1.08,0,-64.480)" letter-spacing="-0.4">20</text>
<text x="181" y="843" fill="#fff" font-size="13" text-anchor="middle" transform="matrix(1,0,0,1.08,0,-67.440)" letter-spacing="-0.4">600</text>
<text x="241" y="768" fill="#fff" font-size="13" text-anchor="middle" transform="matrix(1,0,0,1.08,0,-61.440)" letter-spacing="-0.4">-20</text>
<text x="241" y="806" fill="#fff" font-size="13" text-anchor="middle" transform="matrix(1,0,0,1.08,0,-64.480)" letter-spacing="-0.4">30</text>
<text x="241" y="843" fill="#fff" font-size="13" text-anchor="middle" transform="matrix(1,0,0,1.08,0,-67.440)" letter-spacing="-0.4">900</text>
<text x="301" y="768" fill="#fff" font-size="13" text-anchor="middle" transform="matrix(1,0,0,1.08,0,-61.440)" letter-spacing="-0.4">-10</text>
<text x="301" y="806" fill="#fff" font-size="13" text-anchor="middle" transform="matrix(1,0,0,1.08,0,-64.480)" letter-spacing="-0.4">40</text>
<text x="301" y="843" fill="#fff" font-size="13" text-anchor="middle" transform="matrix(1,0,0,1.08,0,-67.440)" letter-spacing="-0.4">1200</text>
<text x="361" y="768" fill="#fff" font-size="13" text-anchor="middle" transform="matrix(1,0,0,1.08,0,-61.440)" letter-spacing="-0.4">0</text>
<text x="361" y="806" fill="#fff" font-size="13" text-anchor="middle" transform="matrix(1,0,0,1.08,0,-64.480)" letter-spacing="-0.4">50</text>
<text x="361" y="843" fill="#fff" font-size="13" text-anchor="middle" transform="matrix(1,0,0,1.08,0,-67.440)" letter-spacing="-0.4">1500</text>
<text x="421" y="768" fill="#fff" font-size="13" text-anchor="middle" transform="matrix(1,0,0,1.08,0,-61.440)" letter-spacing="-0.4">10</text>
<text x="421" y="806" fill="#fff" font-size="13" text-anchor="middle" transform="matrix(1,0,0,1.08,0,-64.480)" letter-spacing="-0.4">60</text>
<text x="421" y="843" fill="#fff" font-size="13" text-anchor="middle" transform="matrix(1,0,0,1.08,0,-67.440)" letter-spacing="-0.4">1800</text>
<text x="481" y="768" fill="#fff" font-size="13" text-anchor="middle" transform="matrix(1,0,0,1.08,0,-61.440)" letter-spacing="-0.4">20</text>
<text x="481" y="806" fill="#fff" font-size="13" text-anchor="middle" transform="matrix(1,0,0,1.08,0,-64.480)" letter-spacing="-0.4">70</text>
<text x="481" y="843" fill="#fff" font-size="13" text-anchor="middle" transform="matrix(1,0,0,1.08,0,-67.440)" letter-spacing="-0.4">2100</text>
<text x="541" y="768" fill="#fff" font-size="13" text-anchor="middle" transform="matrix(1,0,0,1.08,0,-61.440)" letter-spacing="-0.4">30</text>
<text x="541" y="806" fill="#fff" font-size="13" text-anchor="middle" transform="matrix(1,0,0,1.08,0,-64.480)" letter-spacing="-0.4">80</text>
<text x="541" y="843" fill="#fff" font-size="13" text-anchor="middle" transform="matrix(1,0,0,1.08,0,-67.440)" letter-spacing="-0.4">2400</text>
<text x="601" y="768" fill="#fff" font-size="13" text-anchor="middle" transform="matrix(1,0,0,1.08,0,-61.440)" letter-spacing="-0.4">40</text>
<text x="601" y="806" fill="#fff" font-size="13" text-anchor="middle" transform="matrix(1,0,0,1.08,0,-64.480)" letter-spacing="-0.4">90</text>
<text x="601" y="843" fill="#fff" font-size="13" text-anchor="middle" transform="matrix(1,0,0,1.08,0,-67.440)" letter-spacing="-0.4">2700</text>
<text x="661" y="768" fill="#fff" font-size="13" text-anchor="middle" transform="matrix(1,0,0,1.08,0,-61.440)" letter-spacing="-0.4">50</text>
<text x="661" y="806" fill="#fff" font-size="13" text-anchor="middle" transform="matrix(1,0,0,1.08,0,-64.480)" letter-spacing="-0.4">100</text>
<text x="661" y="843" fill="#fff" font-size="13" text-anchor="middle" transform="matrix(1,0,0,1.08,0,-67.440)" letter-spacing="-0.4">3000</text>
<text x="61" y="880.5" fill="#fff" font-size="13" text-anchor="middle" transform="matrix(1,0,0,1.08,0,-70.440)" letter-spacing="-0.4">-100</text>
<text x="136" y="880.5" fill="#fff" font-size="13" text-anchor="middle" transform="matrix(1,0,0,1.08,0,-70.440)" letter-spacing="-0.4">-50</text>
<text x="211" y="880.5" fill="#fff" font-size="13" text-anchor="middle" transform="matrix(1,0,0,1.08,0,-70.440)" letter-spacing="-0.4">0</text>
<text x="286" y="880.5" fill="#fff" font-size="13" text-anchor="middle" transform="matrix(1,0,0,1.08,0,-70.440)" letter-spacing="-0.4">50</text>
<text x="361" y="880.5" fill="#fff" font-size="13" text-anchor="middle" transform="matrix(1,0,0,1.08,0,-70.440)" letter-spacing="-0.4">100</text>
<text x="436" y="880.5" fill="#fff" font-size="13" text-anchor="middle" transform="matrix(1,0,0,1.08,0,-70.440)" letter-spacing="-0.4">150</text>
<text x="511" y="880.5" fill="#fff" font-size="13" text-anchor="middle" transform="matrix(1,0,0,1.08,0,-70.440)" letter-spacing="-0.4">200</text>
<text x="586" y="880.5" fill="#fff" font-size="13" text-anchor="middle" transform="matrix(1,0,0,1.08,0,-70.440)" letter-spacing="-0.4">250</text>
<text x="661" y="880.5" fill="#fff" font-size="13" text-anchor="middle" transform="matrix(1,0,0,1.08,0,-70.440)" letter-spacing="-0.4">300</text>
<text x="361.2" y="781" fill="#fff" font-size="13" text-anchor="middle" textLength="171.5" lengthAdjust="spacingAndGlyphs" transform="matrix(1,0,0,1.08,0,-62.480)" >Temperature, Dewpoint  [ °C ]</text>
<text x="360.2" y="819.3" fill="#fff" font-size="13" text-anchor="middle" textLength="105.5" lengthAdjust="spacingAndGlyphs" transform="matrix(1,0,0,1.08,0,-65.544)" >Windspeed  [ knt ]</text>
<text x="361" y="857" fill="#fff" font-size="13" text-anchor="middle" textLength="137" lengthAdjust="spacingAndGlyphs" transform="matrix(1,0,0,1.08,0,-68.560)" >CAPE, CINH * 5  [ J/kg ]</text>
<text x="361.6" y="893" fill="#fff" font-size="13" text-anchor="middle" textLength="203.6" lengthAdjust="spacingAndGlyphs" transform="matrix(1,0,0,1.08,0,-71.440)" >Storm Relative Helicity  [ m^2/s^2 ]</text>
<text x="761.2" y="32.5" fill="#00ff00" font-size="14" text-anchor="middle" font-weight="bold" textLength="27.6" lengthAdjust="spacingAndGlyphs" >OBS</text>
<text x="826.2" y="32.5" fill="#ff0080" font-size="14" text-anchor="middle" font-weight="bold" textLength="18.2" lengthAdjust="spacingAndGlyphs" >SR</text>
<line x1="761.5" y1="40" x2="761.5" y2="769" stroke="#00ff00" stroke-width="1"/>
<line x1="826.5" y1="40" x2="826.5" y2="769" stroke="#ff0080" stroke-width="1"/>
<path d="M761.5,146.6L751.4,173.8M761.5,219.0L748.4,244.6M761.5,274.6L748.4,299.5M761.5,322.2L749.5,347.5M761.5,360.7L749.5,386.7M761.5,394.8L748.2,420.8M761.5,423.8L748.2,449.6M761.5,450.4L748.2,475.6M761.5,472.6L748.2,498.4M761.5,493.8L750.2,520.6M761.5,512.5L753.2,540.0M761.5,529.3L752.4,556.0M761.5,545.0L753.5,573.0M761.5,560.2L754.1,588.4M761.5,574.6L754.1,602.8M761.5,586.4L752.4,614.4M761.5,598.6L751.8,626.0M761.5,610.4L752.5,638.4M761.5,620.3L752.5,648.3M761.5,630.4L753.2,658.8M761.5,640.7L753.2,668.7M761.5,648.1L753.2,676.6M761.5,657.5L753.8,685.8M761.5,668.0L753.8,695.7M761.5,682.5L752.5,710.8M761.5,694.6L752.5,724.0M761.5,705.5L786,728.3M761.5,712.8L786,728.3M761.5,719.6L786,728.3M761.5,725.9L786,728.3M761.5,731L786,728.3M761.5,736L786,728.3M776,727.8L791,728.3M778,726L790,731" stroke="#fff" stroke-width="1" fill="none"/>
<path d="M826.5,146.6L855.5,150.3M826.5,219.0L822.5,247.6M826.5,274.6L815.8,301.5M826.5,322.2L818.5,349.3M826.5,360.7L818.2,388.5M826.5,394.8L818.7,422.6M826.5,423.8L817.2,451.6M826.5,450.4L818.5,477.4M826.5,472.6L819.7,500.4M826.5,493.8L823.5,522.4M826.5,512.3L826.0,540.0M826.5,528.9L831.3,557.9M826.5,545.0L831.3,574.3M826.5,560.2L830.7,589.5M826.5,574.6L827.0,603.0M826.5,586.4L826.5,614.5M826.5,598.6L827.0,626.0M826.5,610.4L831.0,638.0M826.5,620.3L838.6,666.0M826.5,640.7L839.9,674.6M826.5,648.1L844.5,688.4M826.5,657.5L844.5,688.0M826.5,665.3L853.7,691.0M826.5,682.5L855.0,691.7M826.5,694.6L853.7,684.5M826.5,705.4L849.0,694.3M826.5,712.3L847.8,699.0M826.5,719.5L847.1,706.2M826.5,726.4L847.0,709.5M826.5,731.0L847.0,712.0M826.5,736.4L847.0,713.4" stroke="#fff" stroke-width="1" fill="none"/>
<text x="894.4" y="40" fill="#fff" font-size="13" textLength="59.4" lengthAdjust="spacingAndGlyphs" transform="matrix(1,0,0,1.08,0,-3.200)" >Parameter</text>
<line x1="894.4" y1="41.5" x2="953.8" y2="41.5" stroke="#fff" stroke-width="1"/>
<text x="1123.2" y="40" fill="#fff" font-size="13" text-anchor="end" transform="matrix(1,0,0,1.08,0,-3.200)" letter-spacing="-0.2">Value LCL</text>
<line x1="1064" y1="41.5" x2="1124" y2="41.5" stroke="#fff"/>
<text x="1213.5" y="40" fill="#fff" font-size="13" text-anchor="end" transform="matrix(1,0,0,1.08,0,-3.200)" letter-spacing="-0.2">Value CCL</text>
<line x1="1152" y1="41.5" x2="1214" y2="41.5" stroke="#fff"/>
<text x="1230.6" y="40" fill="#fff" font-size="13" transform="matrix(1,0,0,1.08,0,-3.200)" letter-spacing="-0.2">Unit</text>
<line x1="1230.6" y1="41.5" x2="1253" y2="41.5" stroke="#fff"/>
<text x="894.4" y="62" fill="#fff" font-size="13" transform="matrix(1,0,0,1.08,0,-4.960)" letter-spacing="-0.1">Convective Temperature:</text>
<text x="1123.2" y="62" fill="#ff0000" font-size="13" text-anchor="end" transform="matrix(1,0,0,1.08,0,-4.960)" letter-spacing="-0.2">27.66</text>
<text x="1230.6" y="62" fill="#fff" font-size="13" transform="matrix(1,0,0,1.08,0,-4.960)" letter-spacing="-0.2">[°C]</text>
<text x="894.4" y="79" fill="#fff" font-size="13" transform="matrix(1,0,0,1.08,0,-6.320)" letter-spacing="-0.1">Snowfall Height:</text>
<text x="1123.2" y="79" fill="#fff" font-size="13" text-anchor="end" transform="matrix(1,0,0,1.08,0,-6.320)" letter-spacing="-0.2">3176.42</text>
<text x="1230.6" y="79" fill="#fff" font-size="13" transform="matrix(1,0,0,1.08,0,-6.320)" letter-spacing="-0.2">[m]</text>
<text x="894.4" y="103.5" fill="#fff" font-size="13" textLength="258.5" lengthAdjust="spacingAndGlyphs" transform="matrix(1,0,0,1.08,0,-8.280)" >Parcels: Using 50mB mean layer LCL + CCL</text>
<line x1="894.4" y1="104.5" x2="1152.9" y2="104.5" stroke="#fff" stroke-width="1"/>
<text x="894.4" y="124" fill="#fff" font-size="13" transform="matrix(1,0,0,1.08,0,-9.920)" letter-spacing="-0.1">Lifted Index:</text>
<text x="1123.2" y="124" fill="#ff0000" font-size="13" text-anchor="end" transform="matrix(1,0,0,1.08,0,-9.920)" letter-spacing="-0.2">-1.95</text>
<text x="1213.5" y="124" fill="#ff0000" font-size="13" text-anchor="end" transform="matrix(1,0,0,1.08,0,-9.920)" letter-spacing="-0.2">-4.52</text>
<text x="1230.6" y="124" fill="#fff" font-size="13" transform="matrix(1,0,0,1.08,0,-9.920)" letter-spacing="-0.2">[°C]</text>
<text x="894.4" y="141" fill="#fff" font-size="13" transform="matrix(1,0,0,1.08,0,-11.280)" letter-spacing="-0.1">CAPE:</text>
<text x="1123.2" y="141" fill="#ff0000" font-size="13" text-anchor="end" transform="matrix(1,0,0,1.08,0,-11.280)" letter-spacing="-0.2">433.87</text>
<text x="1213.5" y="141" fill="#ff0000" font-size="13" text-anchor="end" transform="matrix(1,0,0,1.08,0,-11.280)" letter-spacing="-0.2">1472.48</text>
<text x="1230.6" y="141" fill="#fff" font-size="13" transform="matrix(1,0,0,1.08,0,-11.280)" letter-spacing="-0.2">[J/kg]</text>
<text x="894.4" y="158" fill="#fff" font-size="13" transform="matrix(1,0,0,1.08,0,-12.640)" letter-spacing="-0.1">CINH:</text>
<text x="1123.2" y="158" fill="#ff0000" font-size="13" text-anchor="end" transform="matrix(1,0,0,1.08,0,-12.640)" letter-spacing="-0.2">96.28</text>
<text x="1230.6" y="158" fill="#fff" font-size="13" transform="matrix(1,0,0,1.08,0,-12.640)" letter-spacing="-0.2">[J/kg]</text>
<text x="894.4" y="175" fill="#fff" font-size="13" transform="matrix(1,0,0,1.08,0,-14.000)" letter-spacing="-0.1">CAPE Virt.:</text>
<text x="1123.2" y="175" fill="#ff0000" font-size="13" text-anchor="end" transform="matrix(1,0,0,1.08,0,-14.000)" letter-spacing="-0.2">493.92</text>
<text x="1213.5" y="175" fill="#ff0000" font-size="13" text-anchor="end" transform="matrix(1,0,0,1.08,0,-14.000)" letter-spacing="-0.2">1417.77</text>
<text x="1230.6" y="175" fill="#fff" font-size="13" transform="matrix(1,0,0,1.08,0,-14.000)" letter-spacing="-0.2">[J/kg]</text>
<text x="894.4" y="192" fill="#fff" font-size="13" transform="matrix(1,0,0,1.08,0,-15.360)" letter-spacing="-0.1">CINH Virt.:</text>
<text x="1123.2" y="192" fill="#ff0000" font-size="13" text-anchor="end" transform="matrix(1,0,0,1.08,0,-15.360)" letter-spacing="-0.2">77.06</text>
<text x="1230.6" y="192" fill="#fff" font-size="13" transform="matrix(1,0,0,1.08,0,-15.360)" letter-spacing="-0.2">[J/kg]</text>
<text x="894.4" y="209" fill="#fff" font-size="13" transform="matrix(1,0,0,1.08,0,-16.720)" letter-spacing="-0.1">DCAPE (LFS = 625mB):</text>
<text x="1123.2" y="209" fill="#ffff00" font-size="13" text-anchor="end" transform="matrix(1,0,0,1.08,0,-16.720)" letter-spacing="-0.2">327.21</text>
<text x="1230.6" y="209" fill="#fff" font-size="13" transform="matrix(1,0,0,1.08,0,-16.720)" letter-spacing="-0.2">[J/kg]</text>
<text x="894.4" y="226" fill="#fff" font-size="13" transform="matrix(1,0,0,1.08,0,-18.080)" letter-spacing="-0.1">850-600 Lapse Rate:</text>
<text x="1123.2" y="226" fill="#ff0000" font-size="13" text-anchor="end" transform="matrix(1,0,0,1.08,0,-18.080)" letter-spacing="-0.2">19.94</text>
<text x="1230.6" y="226" fill="#fff" font-size="13" transform="matrix(1,0,0,1.08,0,-18.080)" letter-spacing="-0.2">[°C]</text>
<text x="894.4" y="243" fill="#fff" font-size="13" transform="matrix(1,0,0,1.08,0,-19.440)" letter-spacing="-0.1">Fawbush-Miller Hail Size:</text>
<text x="1123.2" y="243" fill="#ff0000" font-size="13" text-anchor="end" transform="matrix(1,0,0,1.08,0,-19.440)" letter-spacing="-0.2">2.5 - 3.8</text>
<text x="1230.6" y="243" fill="#fff" font-size="13" transform="matrix(1,0,0,1.08,0,-19.440)" letter-spacing="-0.2">[cm]</text>
<text x="894.4" y="260" fill="#fff" font-size="13" transform="matrix(1,0,0,1.08,0,-20.800)" letter-spacing="-0.1">Sig. Hail Param. (SHIP):</text>
<text x="1123.2" y="260" fill="#00ff00" font-size="13" text-anchor="end" transform="matrix(1,0,0,1.08,0,-20.800)" letter-spacing="-0.2">0.41</text>
<text x="1230.6" y="260" fill="#fff" font-size="13" transform="matrix(1,0,0,1.08,0,-20.800)" letter-spacing="-0.2">[1]</text>
<text x="894.4" y="277" fill="#fff" font-size="13" transform="matrix(1,0,0,1.08,0,-22.160)" letter-spacing="-0.1">Max. Hail Size (new, new2, old):</text>
<text x="1123.2" y="277" fill="#ff0000" font-size="13" text-anchor="end" transform="matrix(1,0,0,1.08,0,-22.160)" letter-spacing="-0.2">4.25</text>
<text x="1230.6" y="277" fill="#fff" font-size="13" transform="matrix(1,0,0,1.08,0,-22.160)" letter-spacing="-0.2">[cm]</text>
<text x="1125" y="277" fill="#fff" font-size="13" transform="matrix(1,0,0,1.08,0,-22.160)" >,</text>
<text x="1160" y="277" fill="#ff0000" font-size="13" text-anchor="end" transform="matrix(1,0,0,1.08,0,-22.160)" letter-spacing="-0.2">3.55</text>
<text x="1161.5" y="277" fill="#fff" font-size="13" transform="matrix(1,0,0,1.08,0,-22.160)" >,</text>
<text x="1197.2" y="277" fill="#ff0000" font-size="13" text-anchor="end" transform="matrix(1,0,0,1.08,0,-22.160)" letter-spacing="-0.2">3.74</text>
<text x="894.4" y="297" fill="#fff" font-size="13" transform="matrix(1,0,0,1.08,0,-23.760)" letter-spacing="-0.1">LCL / CCL (AGL):</text>
<text x="1123.2" y="297" fill="#ff0000" font-size="13" text-anchor="end" transform="matrix(1,0,0,1.08,0,-23.760)" letter-spacing="-0.2">935.49</text>
<text x="1213.5" y="297" fill="#ffff00" font-size="13" text-anchor="end" transform="matrix(1,0,0,1.08,0,-23.760)" letter-spacing="-0.2">1553.77</text>
<text x="1230.6" y="297" fill="#fff" font-size="13" transform="matrix(1,0,0,1.08,0,-23.760)" letter-spacing="-0.2">[m]</text>
<text x="894.4" y="314" fill="#fff" font-size="13" transform="matrix(1,0,0,1.08,0,-25.120)" letter-spacing="-0.1">Convective Height:</text>
<text x="1123.2" y="314" fill="#ff0000" font-size="13" text-anchor="end" transform="matrix(1,0,0,1.08,0,-25.120)" letter-spacing="-0.2">8.71</text>
<text x="1213.5" y="314" fill="#ff0000" font-size="13" text-anchor="end" transform="matrix(1,0,0,1.08,0,-25.120)" letter-spacing="-0.2">10.25</text>
<text x="1230.6" y="314" fill="#fff" font-size="13" transform="matrix(1,0,0,1.08,0,-25.120)" letter-spacing="-0.2">[km]</text>
<text x="894.4" y="338.5" fill="#fff" font-size="13" textLength="104.9" lengthAdjust="spacingAndGlyphs" transform="matrix(1,0,0,1.08,0,-27.080)" >Convective Indices</text>
<line x1="894.4" y1="339.5" x2="999.3" y2="339.5" stroke="#fff" stroke-width="1"/>
<text x="894.4" y="359" fill="#fff" font-size="13" transform="matrix(1,0,0,1.08,0,-28.720)" letter-spacing="-0.1">Showalter Index:</text>
<text x="1123.2" y="359" fill="#ff0000" font-size="13" text-anchor="end" transform="matrix(1,0,0,1.08,0,-28.720)" letter-spacing="-0.2">-0.60</text>
<text x="1230.6" y="359" fill="#fff" font-size="13" transform="matrix(1,0,0,1.08,0,-28.720)" letter-spacing="-0.2">[°C]</text>
<text x="894.4" y="376" fill="#fff" font-size="13" transform="matrix(1,0,0,1.08,0,-30.080)" letter-spacing="-0.1">Modified Thompson Index:</text>
<text x="1123.2" y="376" fill="#ff0000" font-size="13" text-anchor="end" transform="matrix(1,0,0,1.08,0,-30.080)" letter-spacing="-0.2">42.49</text>
<text x="1230.6" y="376" fill="#fff" font-size="13" transform="matrix(1,0,0,1.08,0,-30.080)" letter-spacing="-0.2">[°C]</text>
<text x="894.4" y="393" fill="#fff" font-size="13" transform="matrix(1,0,0,1.08,0,-31.440)" letter-spacing="-0.1">Total Totals Index:</text>
<text x="1123.2" y="393" fill="#ff0000" font-size="13" text-anchor="end" transform="matrix(1,0,0,1.08,0,-31.440)" letter-spacing="-0.2">50.01</text>
<text x="1230.6" y="393" fill="#fff" font-size="13" transform="matrix(1,0,0,1.08,0,-31.440)" letter-spacing="-0.2">[°C]</text>
<text x="894.4" y="410" fill="#fff" font-size="13" transform="matrix(1,0,0,1.08,0,-32.800)" letter-spacing="-0.1">KO Index:</text>
<text x="1123.2" y="410" fill="#ff0000" font-size="13" text-anchor="end" transform="matrix(1,0,0,1.08,0,-32.800)" letter-spacing="-0.2">-10.61</text>
<text x="1230.6" y="410" fill="#fff" font-size="13" transform="matrix(1,0,0,1.08,0,-32.800)" letter-spacing="-0.2">[1]</text>
<text x="894.4" y="427" fill="#fff" font-size="13" transform="matrix(1,0,0,1.08,0,-34.160)" letter-spacing="-0.1">Craven SigSvr / 1000:</text>
<text x="1123.2" y="427" fill="#ff0000" font-size="13" text-anchor="end" transform="matrix(1,0,0,1.08,0,-34.160)" letter-spacing="-0.2">8.43</text>
<text x="1230.6" y="427" fill="#fff" font-size="13" transform="matrix(1,0,0,1.08,0,-34.160)" letter-spacing="-0.2">[m^3/s^3]</text>
<text x="894.4" y="444" fill="#fff" font-size="13" transform="matrix(1,0,0,1.08,0,-35.520)" letter-spacing="-0.1">SCP RM (new, old):</text>
<text x="1123.2" y="444" fill="#00ff00" font-size="13" text-anchor="end" transform="matrix(1,0,0,1.08,0,-35.520)" letter-spacing="-0.2">0.23</text>
<text x="1230.6" y="444" fill="#fff" font-size="13" transform="matrix(1,0,0,1.08,0,-35.520)" letter-spacing="-0.2">[1]</text>
<text x="1124.5" y="444" fill="#fff" font-size="13" transform="matrix(1,0,0,1.08,0,-35.520)" >,</text>
<text x="1135.5" y="444" fill="#ffff00" font-size="13" transform="matrix(1,0,0,1.08,0,-35.520)" letter-spacing="-0.2">0.31</text>
<text x="894.4" y="461" fill="#fff" font-size="13" transform="matrix(1,0,0,1.08,0,-36.880)" letter-spacing="-0.1">SCP LM (new, old):</text>
<text x="1123.2" y="461" fill="#00ff00" font-size="13" text-anchor="end" transform="matrix(1,0,0,1.08,0,-36.880)" letter-spacing="-0.2">0.09</text>
<text x="1230.6" y="461" fill="#fff" font-size="13" transform="matrix(1,0,0,1.08,0,-36.880)" letter-spacing="-0.2">[1]</text>
<text x="1124.5" y="461" fill="#fff" font-size="13" transform="matrix(1,0,0,1.08,0,-36.880)" >,</text>
<text x="1135.5" y="461" fill="#ffff00" font-size="13" transform="matrix(1,0,0,1.08,0,-36.880)" letter-spacing="-0.2">0.39</text>
<text x="894.4" y="478" fill="#fff" font-size="13" transform="matrix(1,0,0,1.08,0,-38.240)" letter-spacing="-0.1">STP (new, old):</text>
<text x="1123.2" y="478" fill="#00ff00" font-size="13" text-anchor="end" transform="matrix(1,0,0,1.08,0,-38.240)" letter-spacing="-0.2">0.04</text>
<text x="1230.6" y="478" fill="#fff" font-size="13" transform="matrix(1,0,0,1.08,0,-38.240)" letter-spacing="-0.2">[1]</text>
<text x="1124.5" y="478" fill="#fff" font-size="13" transform="matrix(1,0,0,1.08,0,-38.240)" >,</text>
<text x="1135.5" y="478" fill="#00ff00" font-size="13" transform="matrix(1,0,0,1.08,0,-38.240)" letter-spacing="-0.2">0.04</text>
<text x="894.4" y="495" fill="#fff" font-size="13" transform="matrix(1,0,0,1.08,0,-39.600)" letter-spacing="-0.1">SB STP (fix):</text>
<text x="1123.2" y="495" fill="#00ff00" font-size="13" text-anchor="end" transform="matrix(1,0,0,1.08,0,-39.600)" letter-spacing="-0.2">0.06</text>
<text x="1230.6" y="495" fill="#fff" font-size="13" transform="matrix(1,0,0,1.08,0,-39.600)" letter-spacing="-0.2">[1]</text>
<text x="894.4" y="512" fill="#fff" font-size="13" transform="matrix(1,0,0,1.08,0,-40.960)" letter-spacing="-0.1">Derecho Comp Param:</text>
<text x="1123.2" y="512" fill="#00ff00" font-size="13" text-anchor="end" transform="matrix(1,0,0,1.08,0,-40.960)" letter-spacing="-0.2">0.19</text>
<text x="1230.6" y="512" fill="#fff" font-size="13" transform="matrix(1,0,0,1.08,0,-40.960)" letter-spacing="-0.2">[1]</text>
<text x="894.4" y="529" fill="#fff" font-size="13" transform="matrix(1,0,0,1.08,0,-42.320)" letter-spacing="-0.1">MCS 18m/s (MMP, MSP):</text>
<text x="1123.2" y="529" fill="#00ff00" font-size="13" text-anchor="end" transform="matrix(1,0,0,1.08,0,-42.320)" letter-spacing="-0.2">48.79</text>
<text x="1230.6" y="529" fill="#fff" font-size="13" transform="matrix(1,0,0,1.08,0,-42.320)" letter-spacing="-0.2">[%]</text>
<text x="1124.5" y="529" fill="#fff" font-size="13" transform="matrix(1,0,0,1.08,0,-42.320)" >,</text>
<text x="1135.5" y="529" fill="#fff" font-size="13" transform="matrix(1,0,0,1.08,0,-42.320)" letter-spacing="-0.2">---</text>
<text x="894.4" y="546" fill="#fff" font-size="13" transform="matrix(1,0,0,1.08,0,-43.680)" letter-spacing="-0.1">Exp. Supercell Index CH:</text>
<text x="1123.2" y="546" fill="#ff0000" font-size="13" text-anchor="end" transform="matrix(1,0,0,1.08,0,-43.680)" letter-spacing="-0.2">3.46</text>
<text x="1230.6" y="546" fill="#fff" font-size="13" transform="matrix(1,0,0,1.08,0,-43.680)" letter-spacing="-0.2">[1]</text>
<text x="894.4" y="563" fill="#fff" font-size="13" transform="matrix(1,0,0,1.08,0,-45.040)" letter-spacing="-0.1">SWISS 12 Index:</text>
<text x="1123.2" y="563" fill="#ff0000" font-size="13" text-anchor="end" transform="matrix(1,0,0,1.08,0,-45.040)" letter-spacing="-0.2">-8.58</text>
<text x="1230.6" y="563" fill="#fff" font-size="13" transform="matrix(1,0,0,1.08,0,-45.040)" letter-spacing="-0.2">[1]</text>
<text x="894.4" y="588.5" fill="#fff" font-size="13" textLength="100.3" lengthAdjust="spacingAndGlyphs" transform="matrix(1,0,0,1.08,0,-47.080)" >Wind Parameters</text>
<line x1="894.4" y1="589.5" x2="994.6999999999999" y2="589.5" stroke="#fff" stroke-width="1"/>
<text x="894.4" y="608" fill="#fff" font-size="13" transform="matrix(1,0,0,1.08,0,-48.640)" letter-spacing="-0.1">Storm Direction:</text>
<text x="1123.2" y="608" fill="#fff" font-size="13" text-anchor="end" transform="matrix(1,0,0,1.08,0,-48.640)" letter-spacing="-0.2">218.00</text>
<text x="1230.6" y="608" fill="#fff" font-size="13" transform="matrix(1,0,0,1.08,0,-48.640)" letter-spacing="-0.2">[°]</text>
<text x="894.4" y="625.3" fill="#fff" font-size="13" transform="matrix(1,0,0,1.08,0,-50.024)" letter-spacing="-0.1">Storm Motion:</text>
<text x="1123.2" y="625.3" fill="#ffff00" font-size="13" text-anchor="end" transform="matrix(1,0,0,1.08,0,-50.024)" letter-spacing="-0.2">18.16</text>
<text x="1230.6" y="625.3" fill="#fff" font-size="13" transform="matrix(1,0,0,1.08,0,-50.024)" letter-spacing="-0.2">[knt]</text>
<text x="894.4" y="645" fill="#fff" font-size="13" transform="matrix(1,0,0,1.08,0,-51.600)" letter-spacing="-0.1">SR Wind Sfc-2km:</text>
<text x="1123.2" y="645" fill="#ff0000" font-size="13" text-anchor="end" transform="matrix(1,0,0,1.08,0,-51.600)" letter-spacing="-0.2">16.60</text>
<text x="1230.6" y="645" fill="#fff" font-size="13" transform="matrix(1,0,0,1.08,0,-51.600)" letter-spacing="-0.2">[knt]</text>
<text x="894.4" y="662.5" fill="#fff" font-size="13" transform="matrix(1,0,0,1.08,0,-53.000)" letter-spacing="-0.1">SR Wind 4km-6km:</text>
<text x="1123.2" y="662.5" fill="#ff0000" font-size="13" text-anchor="end" transform="matrix(1,0,0,1.08,0,-53.000)" letter-spacing="-0.2">16.15</text>
<text x="1230.6" y="662.5" fill="#fff" font-size="13" transform="matrix(1,0,0,1.08,0,-53.000)" letter-spacing="-0.2">[knt]</text>
<text x="894.4" y="679.5" fill="#fff" font-size="13" transform="matrix(1,0,0,1.08,0,-54.360)" letter-spacing="-0.1">SR Wind 9km-11km:</text>
<text x="1123.2" y="679.5" fill="#ff0000" font-size="13" text-anchor="end" transform="matrix(1,0,0,1.08,0,-54.360)" letter-spacing="-0.2">24.36</text>
<text x="1230.6" y="679.5" fill="#fff" font-size="13" transform="matrix(1,0,0,1.08,0,-54.360)" letter-spacing="-0.2">[knt] HP</text>
<text x="894.4" y="699.5" fill="#fff" font-size="13" transform="matrix(1,0,0,1.08,0,-55.960)" letter-spacing="-0.1">Effective Shear 6000:</text>
<text x="1123.2" y="699.5" fill="#ff0000" font-size="13" text-anchor="end" transform="matrix(1,0,0,1.08,0,-55.960)" letter-spacing="-0.2">37.74</text>
<text x="1230.6" y="699.5" fill="#fff" font-size="13" transform="matrix(1,0,0,1.08,0,-55.960)" letter-spacing="-0.2">[knt]</text>
<text x="894.4" y="719.5" fill="#fff" font-size="13" transform="matrix(1,0,0,1.08,0,-57.560)" letter-spacing="-0.1">Bulk Richardson Number:</text>
<text x="1123.2" y="719.5" fill="#00ff00" font-size="13" text-anchor="end" transform="matrix(1,0,0,1.08,0,-57.560)" letter-spacing="-0.2">9.58</text>
<text x="1213.5" y="719.5" fill="#ffff00" font-size="13" text-anchor="end" transform="matrix(1,0,0,1.08,0,-57.560)" letter-spacing="-0.2">32.52</text>
<text x="1230.6" y="719.5" fill="#fff" font-size="13" transform="matrix(1,0,0,1.08,0,-57.560)" letter-spacing="-0.2">[1]</text>
<text x="894.4" y="739.5" fill="#fff" font-size="13" transform="matrix(1,0,0,1.08,0,-59.160)" letter-spacing="-0.1">3km Effective SRH:</text>
<text x="1123.2" y="739.5" fill="#00ff00" font-size="13" text-anchor="end" transform="matrix(1,0,0,1.08,0,-59.160)" letter-spacing="-0.2">50.48</text>
<text x="1230.6" y="739.5" fill="#fff" font-size="13" transform="matrix(1,0,0,1.08,0,-59.160)" letter-spacing="-0.2">[m^2/s^2]</text>
<text x="894.4" y="756.5" fill="#fff" font-size="13" transform="matrix(1,0,0,1.08,0,-60.520)" letter-spacing="-0.1">Max 3km SRH (Sfc-2km):</text>
<text x="1123.2" y="756.5" fill="#00ff00" font-size="13" text-anchor="end" transform="matrix(1,0,0,1.08,0,-60.520)" letter-spacing="-0.2">59.51</text>
<text x="1230.6" y="756.5" fill="#fff" font-size="13" transform="matrix(1,0,0,1.08,0,-60.520)" letter-spacing="-0.2">[m^2/s^2]</text>
<text x="894.4" y="773.5" fill="#fff" font-size="13" transform="matrix(1,0,0,1.08,0,-61.880)" letter-spacing="-0.1">Max 3km SRH Level AGL:</text>
<text x="1123.2" y="773.5" fill="#00ff00" font-size="13" text-anchor="end" transform="matrix(1,0,0,1.08,0,-61.880)" letter-spacing="-0.2">1340.00</text>
<text x="1230.6" y="773.5" fill="#fff" font-size="13" transform="matrix(1,0,0,1.08,0,-61.880)" letter-spacing="-0.2">[m]</text>
<text x="894.4" y="793.5" fill="#fff" font-size="13" transform="matrix(1,0,0,1.08,0,-63.480)" letter-spacing="-0.1">3km Energy Helicity Index:</text>
<text x="1123.2" y="793.5" fill="#00ff00" font-size="13" text-anchor="end" transform="matrix(1,0,0,1.08,0,-63.480)" letter-spacing="-0.2">0.14</text>
<text x="1213.5" y="793.5" fill="#00ff00" font-size="13" text-anchor="end" transform="matrix(1,0,0,1.08,0,-63.480)" letter-spacing="-0.2">0.46</text>
<text x="1230.6" y="793.5" fill="#fff" font-size="13" transform="matrix(1,0,0,1.08,0,-63.480)" letter-spacing="-0.2">[1]</text>
<text x="894.4" y="810.5" fill="#fff" font-size="13" transform="matrix(1,0,0,1.08,0,-64.840)" letter-spacing="-0.1">3km Vorticity Gen. Pot.:</text>
<text x="1123.2" y="810.5" fill="#00ff00" font-size="13" text-anchor="end" transform="matrix(1,0,0,1.08,0,-64.840)" letter-spacing="-0.2">0.09</text>
<text x="1213.5" y="810.5" fill="#ff0000" font-size="13" text-anchor="end" transform="matrix(1,0,0,1.08,0,-64.840)" letter-spacing="-0.2">0.17</text>
<text x="1230.6" y="810.5" fill="#fff" font-size="13" transform="matrix(1,0,0,1.08,0,-64.840)" letter-spacing="-0.2">[m/s^2]</text>
<rect x="729" y="827" width="15" height="8" fill="#ff0000"/>
<text x="753.4" y="836" fill="#ff0000" font-size="13" transform="matrix(1,0,0,1.08,0,-66.880)" letter-spacing="-0.1">Temperature Profile</text>
<rect x="729" y="847" width="15" height="8" fill="#00ffff"/>
<text x="753.4" y="856" fill="#00ffff" font-size="13" transform="matrix(1,0,0,1.08,0,-68.480)" letter-spacing="-0.1">Dewpoint Profile</text>
<rect x="729" y="867" width="15" height="8" fill="#00ff00"/>
<text x="753.4" y="876" fill="#00ff00" font-size="13" transform="matrix(1,0,0,1.08,0,-70.080)" letter-spacing="-0.1">OBS Windspeed Profile</text>
<rect x="729" y="887" width="15" height="8" fill="#ff0080"/>
<text x="753.4" y="896" fill="#ff0080" font-size="13" transform="matrix(1,0,0,1.08,0,-71.680)" letter-spacing="-0.1">SR Windspeed Profile</text>
<rect x="729" y="907" width="15" height="8" fill="#c8c800"/>
<text x="753.4" y="916" fill="#c8c800" font-size="13" transform="matrix(1,0,0,1.08,0,-73.280)" letter-spacing="-0.1">Sfc-3km Storm Relative Helicity Profile</text>
<rect x="729" y="927" width="15" height="8" fill="#3f3a00"/>
<text x="753.4" y="936" fill="#4a4510" font-size="13" transform="matrix(1,0,0,1.08,0,-74.880)" letter-spacing="-0.1">Effective Layer (CAPE &gt;= 100 J/kg)</text>
<rect x="1079" y="827" width="15" height="8" fill="#00ff00"/>
<text x="1102.7" y="836" fill="#00ff00" font-size="13" transform="matrix(1,0,0,1.08,0,-66.880)" letter-spacing="-0.1">No / Non Severe Thunderstorms</text>
<rect x="1079" y="847" width="15" height="8" fill="#ffff00"/>
<text x="1102.7" y="856" fill="#ffff00" font-size="13" transform="matrix(1,0,0,1.08,0,-68.480)" letter-spacing="-0.1">Scattered / Moderate Thunderstorms</text>
<rect x="1079" y="867" width="15" height="8" fill="#ff0000"/>
<text x="1102.7" y="876" fill="#ff0000" font-size="13" transform="matrix(1,0,0,1.08,0,-70.080)" letter-spacing="-0.1">Widespread / Severe Thunderstorms</text>
</svg></body></html>
